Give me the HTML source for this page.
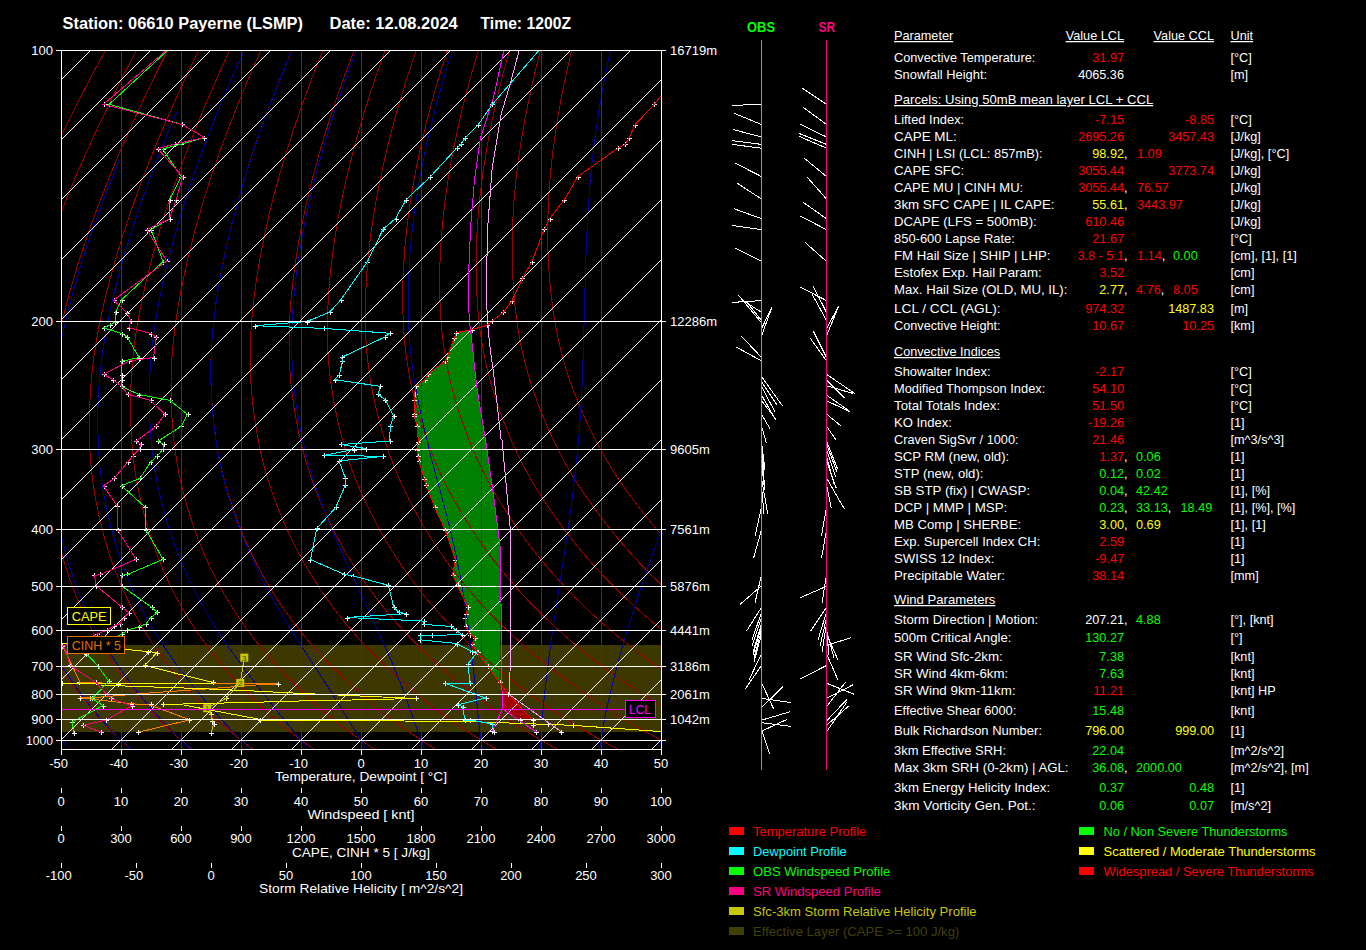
<!DOCTYPE html><html><head><meta charset="utf-8"><style>html,body{margin:0;padding:0;background:#000;width:1366px;height:950px;overflow:hidden}</style></head><body><svg width="1366" height="950" viewBox="0 0 1366 950" style="position:absolute;left:0;top:0;font-family:'Liberation Sans', sans-serif">
<rect width="1366" height="950" fill="#000"/>
<defs><clipPath id="pc"><rect x="61" y="50" width="600" height="699"/></clipPath></defs>
<g clip-path="url(#pc)">
<rect x="61" y="645" width="600" height="87" fill="#3c3800"/>
<polygon points="472.2,329.5 456.0,332.7 454.5,337.6 447.2,356.7 444.9,361.2 428.0,374.4 425.1,379.6 415.5,386.2 414.7,394.3 414.4,400.2 414.0,413.5 414.4,416.4 417.0,426.0 418.5,442.0 416.8,449.5 417.9,455.8 418.9,461.0 424.2,479.0 426.3,485.3 434.7,507.4 445.3,530.5 455.4,559.6 452.6,574.7 457.5,585.3 467.8,607.4 466.3,613.7 465.3,617.9 465.7,626.5 470.1,634.6 475.3,637.6 472.3,643.5 476.7,651.6 487.8,666.3 499.6,682.5 501.0,602.0 500.0,545.3 492.6,488.4 485.5,440.0 480.3,409.0 476.6,385.5 471.5,338.3" fill="#008000"/>
<polygon points="501.5,684 509.5,694.5 533,720.5 522,720.5 502.5,709.5" fill="#a00000"/>
<path d="M652,104.5h5M654.5,102v5M633,125.5h5M635.5,123v5M627,138.5h5M629.5,136v5M623,144.5h5M625.5,142v5M616,148.5h5M618.5,146v5M576,177.5h5M578.5,175v5M562,200.5h5M564.5,198v5M548,219.5h5M550.5,217v5M542,229.5h5M544.5,227v5M530,262.5h5M532.5,260v5M520,278.5h5M522.5,276v5M510,301.5h5M512.5,299v5M501,312.5h5M503.5,310v5M490,321.5h5M492.5,319v5M485,325.5h5M487.5,323v5M470,330.5h5M472.5,328v5M454,333.5h5M456.5,331v5M452,338.5h5M454.5,336v5M445,357.5h5M447.5,355v5M443,361.5h5M445.5,359v5M426,374.5h5M428.5,372v5M423,380.5h5M425.5,378v5M414,386.5h5M416.5,384v5M413,394.5h5M415.5,392v5M412,400.5h5M414.5,398v5M412,414.5h5M414.5,412v5M412,416.5h5M414.5,414v5M415,426.5h5M417.5,424v5M416,442.5h5M418.5,440v5M415,450.5h5M417.5,448v5M416,456.5h5M418.5,454v5M417,461.5h5M419.5,459v5M422,479.5h5M424.5,477v5M424,485.5h5M426.5,483v5M433,507.5h5M435.5,505v5M443,530.5h5M445.5,528v5M453,560.5h5M455.5,558v5M451,575.5h5M453.5,573v5M456,585.5h5M458.5,583v5M466,607.5h5M468.5,605v5M464,614.5h5M466.5,612v5M463,618.5h5M465.5,616v5M464,626.5h5M466.5,624v5M468,635.5h5M470.5,633v5M473,638.5h5M475.5,636v5M470,644.5h5M472.5,642v5M475,652.5h5M477.5,650v5M486,666.5h5M488.5,664v5M498,682.5h5M500.5,680v5M506,694.5h5M508.5,692v5M531,720.5h5M533.5,718v5" stroke="#fff" stroke-width="1" fill="none" shape-rendering="crispEdges"/><path d="M490,104.5h5M492.5,102v5M476,125.5h5M478.5,123v5M463,138.5h5M465.5,136v5M459,144.5h5M461.5,142v5M455,148.5h5M457.5,146v5M428,177.5h5M430.5,175v5M404,200.5h5M406.5,198v5M394,219.5h5M396.5,217v5M381,229.5h5M383.5,227v5M365,262.5h5M367.5,260v5M339,300.5h5M341.5,298v5M328,312.5h5M330.5,310v5M305,322.5h5M307.5,320v5M253,326.5h5M255.5,324v5M322,328.5h5M324.5,326v5M388,333.5h5M390.5,331v5M383,337.5h5M385.5,335v5M340,357.5h5M342.5,355v5M340,361.5h5M342.5,359v5M337,375.5h5M339.5,373v5M333,380.5h5M335.5,378v5M378,386.5h5M380.5,384v5M376,394.5h5M378.5,392v5M383,400.5h5M385.5,398v5M392,416.5h5M394.5,414v5M388,426.5h5M390.5,424v5M388,441.5h5M390.5,439v5M339,444.5h5M341.5,442v5M364,449.5h5M366.5,447v5M352,450.5h5M354.5,448v5M322,455.5h5M324.5,453v5M381,456.5h5M383.5,454v5M337,461.5h5M339.5,459v5M343,478.5h5M345.5,476v5M343,485.5h5M345.5,483v5M334,507.5h5M336.5,505v5M315,528.5h5M317.5,526v5M308,560.5h5M310.5,558v5M342,574.5h5M344.5,572v5M351,576.5h5M353.5,574v5M386,585.5h5M388.5,583v5M392,607.5h5M394.5,605v5M397,612.5h5M399.5,610v5M404,614.5h5M406.5,612v5M345,618.5h5M347.5,616v5M422,621.5h5M424.5,619v5M422,624.5h5M424.5,622v5M449,626.5h5M451.5,624v5M454,630.5h5M456.5,628v5M460,635.5h5M462.5,633v5M430,635.5h5M432.5,633v5M418,635.5h5M420.5,633v5M418,640.5h5M420.5,638v5M455,644.5h5M457.5,642v5M470,652.5h5M472.5,650v5M476,652.5h5M478.5,650v5M466,664.5h5M468.5,662v5M468,683.5h5M470.5,681v5M443,683.5h5M445.5,681v5M484,698.5h5M486.5,696v5M456,705.5h5M458.5,703v5M461,707.5h5M463.5,705v5M463,720.5h5M465.5,718v5M468,720.5h5M470.5,718v5M490,724.5h5M492.5,722v5M492,732.5h5M494.5,730v5" stroke="#fff" stroke-width="1" fill="none" shape-rendering="crispEdges"/><path d="M102,104.5h5M104.5,102v5M180,124.5h5M182.5,122v5M202,138.5h5M204.5,136v5M173,144.5h5M175.5,142v5M156,149.5h5M158.5,147v5M181,177.5h5M183.5,175v5M174,200.5h5M176.5,198v5M168,219.5h5M170.5,217v5M145,230.5h5M147.5,228v5M165,261.5h5M167.5,259v5M112,300.5h5M114.5,298v5M125,313.5h5M127.5,311v5M129,321.5h5M131.5,319v5M127,328.5h5M129.5,326v5M149,334.5h5M151.5,332v5M154,337.5h5M156.5,335v5M152,358.5h5M154.5,356v5M127,361.5h5M129.5,359v5M102,374.5h5M104.5,372v5M111,380.5h5M113.5,378v5M120,386.5h5M122.5,384v5M126,394.5h5M128.5,392v5M149,400.5h5M151.5,398v5M163,414.5h5M165.5,412v5M154,426.5h5M156.5,424v5M134,441.5h5M136.5,439v5M139,444.5h5M141.5,442v5M138,449.5h5M140.5,447v5M131,456.5h5M133.5,454v5M126,462.5h5M128.5,460v5M112,478.5h5M114.5,476v5M102,486.5h5M104.5,484v5M115,506.5h5M117.5,504v5M116,530.5h5M118.5,528v5M134,559.5h5M136.5,557v5M98,574.5h5M100.5,572v5M92,575.5h5M94.5,573v5M94,586.5h5M96.5,584v5M120,607.5h5M122.5,605v5M127,613.5h5M129.5,611v5M122,618.5h5M124.5,616v5M118,624.5h5M120.5,622v5M112,626.5h5M114.5,624v5M105,630.5h5M107.5,628v5M95,634.5h5M97.5,632v5M92,636.5h5M94.5,634v5M60,646.5h5M62.5,644v5M65,652.5h5M67.5,650v5M68,665.5h5M70.5,663v5M94,682.5h5M96.5,680v5M109,698.5h5M111.5,696v5M130,706.5h5M132.5,704v5M104,720.5h5M106.5,718v5M81,725.5h5M83.5,723v5M99,732.5h5M101.5,730v5" stroke="#fff" stroke-width="1" fill="none" shape-rendering="crispEdges"/><path d="M107,104.5h5M109.5,102v5M180,124.5h5M182.5,122v5M202,138.5h5M204.5,136v5M179,144.5h5M181.5,142v5M161,149.5h5M163.5,147v5M179,177.5h5M181.5,175v5M168,200.5h5M170.5,198v5M168,219.5h5M170.5,217v5M149,230.5h5M151.5,228v5M161,262.5h5M163.5,260v5M120,300.5h5M122.5,298v5M114,312.5h5M116.5,310v5M113,322.5h5M115.5,320v5M108,325.5h5M110.5,323v5M102,328.5h5M104.5,326v5M120,334.5h5M122.5,332v5M125,337.5h5M127.5,335v5M137,358.5h5M139.5,356v5M120,361.5h5M122.5,359v5M120,375.5h5M122.5,373v5M120,380.5h5M122.5,378v5M120,386.5h5M122.5,384v5M137,395.5h5M139.5,393v5M168,400.5h5M170.5,398v5M186,414.5h5M188.5,412v5M179,426.5h5M181.5,424v5M156,441.5h5M158.5,439v5M162,444.5h5M164.5,442v5M161,449.5h5M163.5,447v5M155,456.5h5M157.5,454v5M149,462.5h5M151.5,460v5M138,478.5h5M140.5,476v5M120,486.5h5M122.5,484v5M143,507.5h5M145.5,505v5M144,530.5h5M146.5,528v5M161,559.5h5M163.5,557v5M125,574.5h5M127.5,572v5M120,575.5h5M122.5,573v5M120,586.5h5M122.5,584v5M150,607.5h5M152.5,605v5M155,612.5h5M157.5,610v5M149,618.5h5M151.5,616v5M144,624.5h5M146.5,622v5M137,627.5h5M139.5,625v5M125,630.5h5M127.5,628v5M120,634.5h5M122.5,632v5M84,654.5h5M86.5,652v5M96,666.5h5M98.5,664v5M107,681.5h5M109.5,679v5M90,698.5h5M92.5,696v5M101,706.5h5M103.5,704v5M70,722.5h5M72.5,720v5M72,733.5h5M74.5,731v5" stroke="#fff" stroke-width="1" fill="none" shape-rendering="crispEdges"/>
<g shape-rendering="crispEdges"><polyline points="70.6,749.2 68.2,747.0 65.8,744.7 63.4,742.4 61.1,740.1 58.8,737.8 56.5,735.4 54.3,733.1 52.1,730.7 50.0,728.3 47.8,725.9 45.7,723.5 43.7,721.1 41.6,718.6 39.6,716.2 37.7,713.7 35.7,711.2 33.8,708.6 32.0,706.1 30.1,703.5 28.3,701.0 26.5,698.4 24.7,695.8 23.0,693.3 21.2,690.7 19.5,688.1 17.8,685.5 16.2,682.9 14.5,680.3 12.9,677.7 11.3,675.0 9.7,672.4 8.2,669.7 6.7,667.1 5.2,664.4 3.7,661.7 2.2,659.0 0.8,656.3 -0.6,653.6 -2.0,650.9 -3.3,648.1 -4.7,645.4 -6.0,642.6 -7.2,639.9 -8.5,637.1 -9.7,634.3 -10.9,631.5 -12.1,628.7 -13.2,625.8 -14.3,623.0 -15.4,620.1 -16.5,617.2 -17.5,614.4 -18.5,611.5 -19.5,608.6 -20.5,605.6 -21.4,602.7 -22.3,599.8 -23.2,596.8 -24.0,593.8 -24.9,590.8 -25.7,587.9 -26.5,584.8 -27.2,581.8 -28.0,578.8 -28.7,575.8 -29.4,572.7 -30.0,569.7 -30.7,566.6 -31.3,563.5 -31.9,560.4 -32.4,557.3 -33.0,554.2 -33.5,551.0 -34.0,547.9 -34.4,544.7 -34.9,541.6 -35.3,538.4 -35.7,535.2 -36.1,532.0 -36.4,528.8 -36.7,525.6 -37.0,522.3 -37.3,519.1 -37.6,515.8 -37.8,512.6 -38.0,509.3 -38.2,506.0 -38.4,502.7 -38.6,499.4 -38.7,496.1 -38.8,492.8 -38.9,489.5 -38.9,486.1 -39.0,482.8 -39.0,479.4 -38.9,476.0 -38.9,472.6 -38.8,469.1 -38.7,465.7 -38.5,462.2 -38.3,458.7 -38.1,455.2 -37.9,451.7 -37.6,448.1 -37.3,444.6 -37.0,441.0 -36.7,437.4 -36.3,433.8 -35.9,430.2 -35.5,426.6 -35.1,423.0 -34.6,419.3 -34.2,415.7 -33.7,412.0 -33.1,408.3 -32.6,404.6 -32.0,400.9 -31.4,397.2 -30.8,393.5 -30.1,389.7 -29.4,385.9 -28.7,382.1 -27.9,378.3 -27.1,374.4 -26.3,370.6 -25.5,366.7 -24.6,362.8 -23.7,358.9 -22.8,354.9 -21.8,350.9 -20.8,347.0 -19.7,342.9 -18.6,338.9 -17.5,334.8 -16.4,330.7 -15.2,326.6 -13.9,322.4 -12.7,318.2 -11.4,314.0 -10.1,309.8 -8.7,305.6 -7.3,301.3 -5.9,297.1 -4.5,292.8 -3.0,288.5 -1.5,284.1 -0.0,279.8 1.5,275.4 3.1,271.1 4.7,266.7 6.3,262.2 8.0,257.8 9.7,253.4 11.4,248.9 13.1,244.4 14.9,239.9 16.7,235.3 18.5,230.8 20.4,226.2 22.3,221.6 24.2,217.0 26.1,212.4 28.1,207.8 30.1,203.1 32.1,198.4 34.2,193.7 36.3,189.0 38.4,184.3 40.5,179.5 42.7,174.7 44.9,169.9 47.1,165.1 49.4,160.3 51.7,155.4 54.0,150.5 56.3,145.6 58.7,140.7 61.1,135.8 63.5,130.8 66.0,125.8 68.5,120.8 71.0,115.8 73.5,110.8 76.1,105.7 78.7,100.6 81.3,95.5 84.0,90.4 86.7,85.3 89.4,80.1 92.1,74.9 94.9,69.7 97.7,64.5 100.6,59.2 103.4,54.0 106.3,48.7 109.2,43.4 112.2,38.0 115.2,32.7 118.2,27.3" fill="none" stroke="#9a0000" stroke-width="1" />
<polyline points="131.4,749.2 128.8,747.0 126.2,744.7 123.6,742.4 121.1,740.1 118.6,737.8 116.1,735.4 113.7,733.1 111.3,730.7 108.9,728.3 106.6,725.9 104.3,723.5 102.0,721.1 99.8,718.6 97.6,716.2 95.4,713.7 93.3,711.2 91.2,708.6 89.1,706.1 87.1,703.5 85.1,701.0 83.1,698.4 81.1,695.8 79.2,693.3 77.2,690.7 75.3,688.1 73.5,685.5 71.6,682.9 69.8,680.3 67.9,677.7 66.2,675.0 64.4,672.4 62.7,669.7 61.0,667.1 59.3,664.4 57.6,661.7 56.0,659.0 54.4,656.3 52.8,653.6 51.2,650.9 49.7,648.1 48.2,645.4 46.7,642.6 45.2,639.9 43.8,637.1 42.4,634.3 41.0,631.5 39.7,628.7 38.4,625.8 37.1,623.0 35.8,620.1 34.6,617.2 33.3,614.4 32.2,611.5 31.0,608.6 29.9,605.6 28.8,602.7 27.7,599.8 26.6,596.8 25.6,593.8 24.6,590.8 23.6,587.9 22.7,584.8 21.7,581.8 20.8,578.8 20.0,575.8 19.1,572.7 18.3,569.7 17.5,566.6 16.7,563.5 15.9,560.4 15.2,557.3 14.5,554.2 13.8,551.0 13.2,547.9 12.5,544.7 11.9,541.6 11.3,538.4 10.8,535.2 10.3,532.0 9.8,528.8 9.3,525.6 8.8,522.3 8.4,519.1 8.0,515.8 7.6,512.6 7.2,509.3 6.8,506.0 6.5,502.7 6.2,499.4 5.9,496.1 5.7,492.8 5.4,489.5 5.2,486.1 5.0,482.8 4.9,479.4 4.8,476.0 4.7,472.6 4.6,469.1 4.6,465.7 4.6,462.2 4.6,458.7 4.7,455.2 4.8,451.7 4.9,448.1 5.0,444.6 5.2,441.0 5.4,437.4 5.6,433.8 5.9,430.2 6.1,426.6 6.4,423.0 6.7,419.3 7.0,415.7 7.4,412.0 7.8,408.3 8.2,404.6 8.6,400.9 9.1,397.2 9.6,393.5 10.1,389.7 10.7,385.9 11.3,382.1 11.9,378.3 12.5,374.4 13.2,370.6 13.9,366.7 14.6,362.8 15.4,358.9 16.2,354.9 17.1,350.9 17.9,347.0 18.9,342.9 19.8,338.9 20.8,334.8 21.8,330.7 22.9,326.6 24.0,322.4 25.1,318.2 26.3,314.0 27.5,309.8 28.7,305.6 29.9,301.3 31.2,297.1 32.5,292.8 33.9,288.5 35.2,284.1 36.6,279.8 38.0,275.4 39.5,271.1 41.0,266.7 42.5,262.2 44.0,257.8 45.6,253.4 47.2,248.9 48.8,244.4 50.4,239.9 52.1,235.3 53.8,230.8 55.5,226.2 57.3,221.6 59.1,217.0 60.9,212.4 62.8,207.8 64.7,203.1 66.6,198.4 68.5,193.7 70.5,189.0 72.5,184.3 74.5,179.5 76.5,174.7 78.6,169.9 80.7,165.1 82.9,160.3 85.0,155.4 87.2,150.5 89.5,145.6 91.7,140.7 94.0,135.8 96.3,130.8 98.7,125.8 101.0,120.8 103.5,115.8 105.9,110.8 108.3,105.7 110.8,100.6 113.4,95.5 115.9,90.4 118.5,85.3 121.1,80.1 123.7,74.9 126.4,69.7 129.1,64.5 131.8,59.2 134.6,54.0 137.4,48.7 140.2,43.4 143.0,38.0 145.9,32.7 148.8,27.3" fill="none" stroke="#9a0000" stroke-width="1" />
<polyline points="192.3,749.2 189.4,747.0 186.6,744.7 183.8,742.4 181.1,740.1 178.4,737.8 175.7,735.4 173.1,733.1 170.5,730.7 167.9,728.3 165.4,725.9 162.9,723.5 160.4,721.1 158.0,718.6 155.6,716.2 153.2,713.7 150.9,711.2 148.6,708.6 146.3,706.1 144.1,703.5 141.9,701.0 139.7,698.4 137.5,695.8 135.4,693.3 133.2,690.7 131.1,688.1 129.1,685.5 127.0,682.9 125.0,680.3 123.0,677.7 121.0,675.0 119.1,672.4 117.1,669.7 115.3,667.1 113.4,664.4 111.5,661.7 109.7,659.0 107.9,656.3 106.1,653.6 104.4,650.9 102.7,648.1 101.0,645.4 99.3,642.6 97.7,639.9 96.1,637.1 94.5,634.3 92.9,631.5 91.4,628.7 89.9,625.8 88.4,623.0 87.0,620.1 85.6,617.2 84.2,614.4 82.8,611.5 81.5,608.6 80.2,605.6 78.9,602.7 77.7,599.8 76.4,596.8 75.2,593.8 74.1,590.8 72.9,587.9 71.8,584.8 70.7,581.8 69.6,578.8 68.6,575.8 67.6,572.7 66.6,569.7 65.6,566.6 64.6,563.5 63.7,560.4 62.8,557.3 62.0,554.2 61.1,551.0 60.3,547.9 59.5,544.7 58.7,541.6 58.0,538.4 57.3,535.2 56.6,532.0 55.9,528.8 55.3,525.6 54.7,522.3 54.1,519.1 53.5,515.8 53.0,512.6 52.4,509.3 51.9,506.0 51.4,502.7 51.0,499.4 50.5,496.1 50.1,492.8 49.7,489.5 49.4,486.1 49.0,482.8 48.7,479.4 48.5,476.0 48.2,472.6 48.0,469.1 47.8,465.7 47.7,462.2 47.5,458.7 47.5,455.2 47.4,451.7 47.4,448.1 47.4,444.6 47.4,441.0 47.5,437.4 47.5,433.8 47.6,430.2 47.7,426.6 47.9,423.0 48.1,419.3 48.2,415.7 48.5,412.0 48.7,408.3 49.0,404.6 49.3,400.9 49.6,397.2 50.0,393.5 50.3,389.7 50.8,385.9 51.2,382.1 51.7,378.3 52.2,374.4 52.7,370.6 53.3,366.7 53.9,362.8 54.5,358.9 55.2,354.9 55.9,350.9 56.7,347.0 57.5,342.9 58.3,338.9 59.1,334.8 60.0,330.7 60.9,326.6 61.9,322.4 62.9,318.2 63.9,314.0 65.0,309.8 66.1,305.6 67.2,301.3 68.4,297.1 69.6,292.8 70.8,288.5 72.0,284.1 73.3,279.8 74.6,275.4 75.9,271.1 77.2,266.7 78.6,262.2 80.0,257.8 81.5,253.4 82.9,248.9 84.4,244.4 86.0,239.9 87.5,235.3 89.1,230.8 90.7,226.2 92.3,221.6 94.0,217.0 95.7,212.4 97.5,207.8 99.2,203.1 101.0,198.4 102.8,193.7 104.7,189.0 106.5,184.3 108.5,179.5 110.4,174.7 112.4,169.9 114.3,165.1 116.4,160.3 118.4,155.4 120.5,150.5 122.6,145.6 124.8,140.7 126.9,135.8 129.1,130.8 131.4,125.8 133.6,120.8 135.9,115.8 138.2,110.8 140.6,105.7 143.0,100.6 145.4,95.5 147.8,90.4 150.3,85.3 152.8,80.1 155.3,74.9 157.9,69.7 160.5,64.5 163.1,59.2 165.7,54.0 168.4,48.7 171.1,43.4 173.9,38.0 176.6,32.7 179.4,27.3" fill="none" stroke="#9a0000" stroke-width="1" />
<polyline points="253.1,749.2 250.1,747.0 247.0,744.7 244.1,742.4 241.1,740.1 238.2,737.8 235.3,735.4 232.5,733.1 229.7,730.7 226.9,728.3 224.2,725.9 221.5,723.5 218.8,721.1 216.1,718.6 213.5,716.2 211.0,713.7 208.5,711.2 206.0,708.6 203.5,706.1 201.1,703.5 198.7,701.0 196.3,698.4 193.9,695.8 191.6,693.3 189.3,690.7 187.0,688.1 184.7,685.5 182.5,682.9 180.2,680.3 178.0,677.7 175.9,675.0 173.7,672.4 171.6,669.7 169.5,667.1 167.5,664.4 165.5,661.7 163.5,659.0 161.5,656.3 159.5,653.6 157.6,650.9 155.7,648.1 153.8,645.4 151.9,642.6 150.1,639.9 148.3,637.1 146.6,634.3 144.8,631.5 143.1,628.7 141.5,625.8 139.8,623.0 138.2,620.1 136.6,617.2 135.0,614.4 133.5,611.5 132.0,608.6 130.5,605.6 129.1,602.7 127.6,599.8 126.2,596.8 124.9,593.8 123.5,590.8 122.2,587.9 120.9,584.8 119.6,581.8 118.4,578.8 117.2,575.8 116.0,572.7 114.8,569.7 113.7,566.6 112.6,563.5 111.5,560.4 110.4,557.3 109.4,554.2 108.4,551.0 107.4,547.9 106.5,544.7 105.5,541.6 104.6,538.4 103.8,535.2 102.9,532.0 102.1,528.8 101.3,525.6 100.5,522.3 99.8,519.1 99.0,515.8 98.3,512.6 97.6,509.3 97.0,506.0 96.3,502.7 95.7,499.4 95.1,496.1 94.6,492.8 94.0,489.5 93.5,486.1 93.0,482.8 92.6,479.4 92.1,476.0 91.8,472.6 91.4,469.1 91.1,465.7 90.8,462.2 90.5,458.7 90.2,455.2 90.0,451.7 89.9,448.1 89.7,444.6 89.6,441.0 89.5,437.4 89.5,433.8 89.4,430.2 89.4,426.6 89.4,423.0 89.4,419.3 89.4,415.7 89.5,412.0 89.6,408.3 89.8,404.6 89.9,400.9 90.1,397.2 90.3,393.5 90.6,389.7 90.8,385.9 91.1,382.1 91.5,378.3 91.9,374.4 92.3,370.6 92.7,366.7 93.2,362.8 93.7,358.9 94.2,354.9 94.8,350.9 95.4,347.0 96.0,342.9 96.7,338.9 97.4,334.8 98.2,330.7 99.0,326.6 99.8,322.4 100.7,318.2 101.6,314.0 102.5,309.8 103.5,305.6 104.5,301.3 105.5,297.1 106.6,292.8 107.7,288.5 108.8,284.1 109.9,279.8 111.1,275.4 112.3,271.1 113.5,266.7 114.8,262.2 116.0,257.8 117.4,253.4 118.7,248.9 120.1,244.4 121.5,239.9 122.9,235.3 124.4,230.8 125.9,226.2 127.4,221.6 128.9,217.0 130.5,212.4 132.1,207.8 133.8,203.1 135.4,198.4 137.1,193.7 138.9,189.0 140.6,184.3 142.4,179.5 144.2,174.7 146.1,169.9 148.0,165.1 149.9,160.3 151.8,155.4 153.8,150.5 155.8,145.6 157.8,140.7 159.9,135.8 162.0,130.8 164.1,125.8 166.2,120.8 168.4,115.8 170.6,110.8 172.9,105.7 175.1,100.6 177.4,95.5 179.7,90.4 182.1,85.3 184.5,80.1 186.9,74.9 189.4,69.7 191.9,64.5 194.4,59.2 196.9,54.0 199.5,48.7 202.1,43.4 204.7,38.0 207.4,32.7 210.1,27.3" fill="none" stroke="#9a0000" stroke-width="1" />
<polyline points="313.9,749.2 310.7,747.0 307.5,744.7 304.3,742.4 301.1,740.1 298.0,737.8 294.9,735.4 291.9,733.1 288.9,730.7 285.9,728.3 282.9,725.9 280.0,723.5 277.2,721.1 274.3,718.6 271.5,716.2 268.8,713.7 266.0,711.2 263.3,708.6 260.7,706.1 258.0,703.5 255.4,701.0 252.9,698.4 250.3,695.8 247.8,693.3 245.3,690.7 242.8,688.1 240.3,685.5 237.9,682.9 235.5,680.3 233.1,677.7 230.7,675.0 228.4,672.4 226.1,669.7 223.8,667.1 221.6,664.4 219.4,661.7 217.2,659.0 215.0,656.3 212.9,653.6 210.8,650.9 208.7,648.1 206.6,645.4 204.6,642.6 202.6,639.9 200.6,637.1 198.7,634.3 196.8,631.5 194.9,628.7 193.0,625.8 191.2,623.0 189.4,620.1 187.6,617.2 185.9,614.4 184.2,611.5 182.5,608.6 180.8,605.6 179.2,602.7 177.6,599.8 176.1,596.8 174.5,593.8 173.0,590.8 171.5,587.9 170.0,584.8 168.6,581.8 167.2,578.8 165.8,575.8 164.5,572.7 163.1,569.7 161.8,566.6 160.5,563.5 159.3,560.4 158.1,557.3 156.9,554.2 155.7,551.0 154.6,547.9 153.4,544.7 152.4,541.6 151.3,538.4 150.3,535.2 149.3,532.0 148.3,528.8 147.3,525.6 146.4,522.3 145.5,519.1 144.6,515.8 143.7,512.6 142.9,509.3 142.0,506.0 141.2,502.7 140.5,499.4 139.7,496.1 139.0,492.8 138.3,489.5 137.7,486.1 137.0,482.8 136.4,479.4 135.8,476.0 135.3,472.6 134.8,469.1 134.3,465.7 133.8,462.2 133.4,458.7 133.0,455.2 132.7,451.7 132.4,448.1 132.1,444.6 131.8,441.0 131.6,437.4 131.4,433.8 131.2,430.2 131.0,426.6 130.9,423.0 130.7,419.3 130.6,415.7 130.6,412.0 130.5,408.3 130.5,404.6 130.6,400.9 130.6,397.2 130.7,393.5 130.8,389.7 130.9,385.9 131.1,382.1 131.3,378.3 131.5,374.4 131.8,370.6 132.1,366.7 132.4,362.8 132.8,358.9 133.2,354.9 133.6,350.9 134.1,347.0 134.6,342.9 135.2,338.9 135.8,334.8 136.4,330.7 137.1,326.6 137.8,322.4 138.5,318.2 139.3,314.0 140.1,309.8 140.9,305.6 141.8,301.3 142.7,297.1 143.6,292.8 144.6,288.5 145.5,284.1 146.5,279.8 147.6,275.4 148.7,271.1 149.8,266.7 150.9,262.2 152.1,257.8 153.2,253.4 154.5,248.9 155.7,244.4 157.0,239.9 158.3,235.3 159.6,230.8 161.0,226.2 162.4,221.6 163.9,217.0 165.3,212.4 166.8,207.8 168.3,203.1 169.9,198.4 171.5,193.7 173.1,189.0 174.7,184.3 176.4,179.5 178.1,174.7 179.8,169.9 181.6,165.1 183.4,160.3 185.2,155.4 187.1,150.5 188.9,145.6 190.8,140.7 192.8,135.8 194.8,130.8 196.8,125.8 198.8,120.8 200.9,115.8 203.0,110.8 205.1,105.7 207.3,100.6 209.4,95.5 211.7,90.4 213.9,85.3 216.2,80.1 218.5,74.9 220.9,69.7 223.2,64.5 225.6,59.2 228.1,54.0 230.5,48.7 233.0,43.4 235.6,38.0 238.1,32.7 240.7,27.3" fill="none" stroke="#9a0000" stroke-width="1" />
<polyline points="374.8,749.2 371.3,747.0 367.9,744.7 364.5,742.4 361.1,740.1 357.8,737.8 354.5,735.4 351.3,733.1 348.1,730.7 344.9,728.3 341.7,725.9 338.6,723.5 335.5,721.1 332.5,718.6 329.5,716.2 326.5,713.7 323.6,711.2 320.7,708.6 317.9,706.1 315.0,703.5 312.2,701.0 309.5,698.4 306.7,695.8 304.0,693.3 301.3,690.7 298.6,688.1 295.9,685.5 293.3,682.9 290.7,680.3 288.1,677.7 285.6,675.0 283.1,672.4 280.6,669.7 278.1,667.1 275.7,664.4 273.3,661.7 270.9,659.0 268.6,656.3 266.2,653.6 263.9,650.9 261.7,648.1 259.4,645.4 257.2,642.6 255.0,639.9 252.9,637.1 250.8,634.3 248.7,631.5 246.6,628.7 244.6,625.8 242.6,623.0 240.6,620.1 238.7,617.2 236.8,614.4 234.9,611.5 233.0,608.6 231.2,605.6 229.4,602.7 227.6,599.8 225.9,596.8 224.1,593.8 222.5,590.8 220.8,587.9 219.2,584.8 217.6,581.8 216.0,578.8 214.4,575.8 212.9,572.7 211.4,569.7 209.9,566.6 208.5,563.5 207.1,560.4 205.7,557.3 204.3,554.2 203.0,551.0 201.7,547.9 200.4,544.7 199.2,541.6 197.9,538.4 196.8,535.2 195.6,532.0 194.4,528.8 193.3,525.6 192.2,522.3 191.2,519.1 190.1,515.8 189.1,512.6 188.1,509.3 187.1,506.0 186.2,502.7 185.2,499.4 184.3,496.1 183.5,492.8 182.6,489.5 181.8,486.1 181.0,482.8 180.3,479.4 179.5,476.0 178.8,472.6 178.2,469.1 177.5,465.7 176.9,462.2 176.4,458.7 175.8,455.2 175.3,451.7 174.9,448.1 174.5,444.6 174.0,441.0 173.7,437.4 173.3,433.8 173.0,430.2 172.6,426.6 172.3,423.0 172.1,419.3 171.9,415.7 171.6,412.0 171.5,408.3 171.3,404.6 171.2,400.9 171.1,397.2 171.0,393.5 171.0,389.7 171.0,385.9 171.0,382.1 171.1,378.3 171.2,374.4 171.3,370.6 171.5,366.7 171.7,362.8 171.9,358.9 172.2,354.9 172.5,350.9 172.8,347.0 173.2,342.9 173.6,338.9 174.1,334.8 174.6,330.7 175.1,326.6 175.7,322.4 176.3,318.2 177.0,314.0 177.6,309.8 178.3,305.6 179.1,301.3 179.8,297.1 180.6,292.8 181.4,288.5 182.3,284.1 183.2,279.8 184.1,275.4 185.1,271.1 186.0,266.7 187.0,262.2 188.1,257.8 189.1,253.4 190.2,248.9 191.4,244.4 192.5,239.9 193.7,235.3 194.9,230.8 196.2,226.2 197.5,221.6 198.8,217.0 200.1,212.4 201.5,207.8 202.9,203.1 204.3,198.4 205.8,193.7 207.3,189.0 208.8,184.3 210.3,179.5 211.9,174.7 213.5,169.9 215.2,165.1 216.9,160.3 218.6,155.4 220.3,150.5 222.1,145.6 223.9,140.7 225.7,135.8 227.6,130.8 229.5,125.8 231.4,120.8 233.4,115.8 235.3,110.8 237.4,105.7 239.4,100.6 241.5,95.5 243.6,90.4 245.7,85.3 247.9,80.1 250.1,74.9 252.3,69.7 254.6,64.5 256.9,59.2 259.2,54.0 261.6,48.7 264.0,43.4 266.4,38.0 268.8,32.7 271.3,27.3" fill="none" stroke="#9a0000" stroke-width="1" />
<polyline points="435.6,749.2 432.0,747.0 428.3,744.7 424.7,742.4 421.1,740.1 417.6,737.8 414.1,735.4 410.7,733.1 407.2,730.7 403.9,728.3 400.5,725.9 397.2,723.5 393.9,721.1 390.7,718.6 387.5,716.2 384.3,713.7 381.2,711.2 378.1,708.6 375.0,706.1 372.0,703.5 369.0,701.0 366.0,698.4 363.1,695.8 360.2,693.3 357.3,690.7 354.4,688.1 351.6,685.5 348.7,682.9 346.0,680.3 343.2,677.7 340.5,675.0 337.8,672.4 335.1,669.7 332.4,667.1 329.8,664.4 327.2,661.7 324.7,659.0 322.1,656.3 319.6,653.6 317.1,650.9 314.7,648.1 312.3,645.4 309.9,642.6 307.5,639.9 305.2,637.1 302.9,634.3 300.6,631.5 298.4,628.7 296.1,625.8 294.0,623.0 291.8,620.1 289.7,617.2 287.6,614.4 285.5,611.5 283.5,608.6 281.5,605.6 279.5,602.7 277.6,599.8 275.7,596.8 273.8,593.8 271.9,590.8 270.1,587.9 268.3,584.8 266.5,581.8 264.8,578.8 263.1,575.8 261.4,572.7 259.7,569.7 258.1,566.6 256.5,563.5 254.9,560.4 253.3,557.3 251.8,554.2 250.3,551.0 248.8,547.9 247.4,544.7 246.0,541.6 244.6,538.4 243.2,535.2 241.9,532.0 240.6,528.8 239.3,525.6 238.1,522.3 236.9,519.1 235.7,515.8 234.5,512.6 233.3,509.3 232.2,506.0 231.1,502.7 230.0,499.4 228.9,496.1 227.9,492.8 226.9,489.5 225.9,486.1 225.0,482.8 224.1,479.4 223.2,476.0 222.4,472.6 221.6,469.1 220.8,465.7 220.0,462.2 219.3,458.7 218.6,455.2 218.0,451.7 217.4,448.1 216.8,444.6 216.2,441.0 215.7,437.4 215.2,433.8 214.7,430.2 214.3,426.6 213.8,423.0 213.4,419.3 213.1,415.7 212.7,412.0 212.4,408.3 212.1,404.6 211.8,400.9 211.6,397.2 211.4,393.5 211.2,389.7 211.1,385.9 211.0,382.1 210.9,378.3 210.9,374.4 210.9,370.6 210.9,366.7 210.9,362.8 211.0,358.9 211.2,354.9 211.3,350.9 211.6,347.0 211.8,342.9 212.1,338.9 212.4,334.8 212.8,330.7 213.2,326.6 213.6,322.4 214.1,318.2 214.6,314.0 215.2,309.8 215.7,305.6 216.3,301.3 217.0,297.1 217.6,292.8 218.3,288.5 219.1,284.1 219.8,279.8 220.6,275.4 221.4,271.1 222.3,266.7 223.2,262.2 224.1,257.8 225.0,253.4 226.0,248.9 227.0,244.4 228.0,239.9 229.1,235.3 230.2,230.8 231.3,226.2 232.5,221.6 233.7,217.0 234.9,212.4 236.2,207.8 237.4,203.1 238.7,198.4 240.1,193.7 241.5,189.0 242.9,184.3 244.3,179.5 245.8,174.7 247.3,169.9 248.8,165.1 250.4,160.3 252.0,155.4 253.6,150.5 255.2,145.6 256.9,140.7 258.6,135.8 260.4,130.8 262.2,125.8 264.0,120.8 265.8,115.8 267.7,110.8 269.6,105.7 271.5,100.6 273.5,95.5 275.5,90.4 277.5,85.3 279.6,80.1 281.7,74.9 283.8,69.7 286.0,64.5 288.2,59.2 290.4,54.0 292.6,48.7 294.9,43.4 297.2,38.0 299.6,32.7 301.9,27.3" fill="none" stroke="#9a0000" stroke-width="1" />
<polyline points="496.5,749.2 492.6,747.0 488.7,744.7 484.9,742.4 481.2,740.1 477.4,737.8 473.7,735.4 470.1,733.1 466.4,730.7 462.8,728.3 459.3,725.9 455.8,723.5 452.3,721.1 448.8,718.6 445.4,716.2 442.1,713.7 438.8,711.2 435.5,708.6 432.2,706.1 429.0,703.5 425.8,701.0 422.6,698.4 419.5,695.8 416.4,693.3 413.3,690.7 410.2,688.1 407.2,685.5 404.2,682.9 401.2,680.3 398.2,677.7 395.3,675.0 392.4,672.4 389.6,669.7 386.7,667.1 383.9,664.4 381.2,661.7 378.4,659.0 375.7,656.3 373.0,653.6 370.3,650.9 367.7,648.1 365.1,645.4 362.5,642.6 359.9,639.9 357.4,637.1 355.0,634.3 352.5,631.5 350.1,628.7 347.7,625.8 345.3,623.0 343.0,620.1 340.7,617.2 338.5,614.4 336.2,611.5 334.0,608.6 331.8,605.6 329.7,602.7 327.6,599.8 325.5,596.8 323.4,593.8 321.4,590.8 319.4,587.9 317.4,584.8 315.5,581.8 313.6,578.8 311.7,575.8 309.8,572.7 308.0,569.7 306.2,566.6 304.4,563.5 302.7,560.4 301.0,557.3 299.3,554.2 297.6,551.0 296.0,547.9 294.4,544.7 292.8,541.6 291.2,538.4 289.7,535.2 288.2,532.0 286.8,528.8 285.4,525.6 283.9,522.3 282.6,519.1 281.2,515.8 279.9,512.6 278.5,509.3 277.2,506.0 276.0,502.7 274.8,499.4 273.5,496.1 272.4,492.8 271.2,489.5 270.1,486.1 269.0,482.8 267.9,479.4 266.9,476.0 265.9,472.6 264.9,469.1 264.0,465.7 263.1,462.2 262.3,458.7 261.4,455.2 260.6,451.7 259.9,448.1 259.2,444.6 258.5,441.0 257.8,437.4 257.1,433.8 256.5,430.2 255.9,426.6 255.3,423.0 254.8,419.3 254.3,415.7 253.8,412.0 253.3,408.3 252.9,404.6 252.5,400.9 252.1,397.2 251.8,393.5 251.4,389.7 251.2,385.9 250.9,382.1 250.7,378.3 250.5,374.4 250.4,370.6 250.3,366.7 250.2,362.8 250.2,358.9 250.2,354.9 250.2,350.9 250.3,347.0 250.4,342.9 250.5,338.9 250.7,334.8 251.0,330.7 251.2,326.6 251.6,322.4 251.9,318.2 252.3,314.0 252.7,309.8 253.1,305.6 253.6,301.3 254.1,297.1 254.7,292.8 255.2,288.5 255.8,284.1 256.5,279.8 257.1,275.4 257.8,271.1 258.6,266.7 259.3,262.2 260.1,257.8 260.9,253.4 261.8,248.9 262.7,244.4 263.6,239.9 264.5,235.3 265.5,230.8 266.5,226.2 267.5,221.6 268.6,217.0 269.7,212.4 270.8,207.8 272.0,203.1 273.2,198.4 274.4,193.7 275.7,189.0 277.0,184.3 278.3,179.5 279.6,174.7 281.0,169.9 282.4,165.1 283.9,160.3 285.3,155.4 286.9,150.5 288.4,145.6 290.0,140.7 291.6,135.8 293.2,130.8 294.9,125.8 296.6,120.8 298.3,115.8 300.1,110.8 301.9,105.7 303.7,100.6 305.5,95.5 307.4,90.4 309.3,85.3 311.3,80.1 313.3,74.9 315.3,69.7 317.3,64.5 319.4,59.2 321.5,54.0 323.7,48.7 325.9,43.4 328.1,38.0 330.3,32.7 332.6,27.3" fill="none" stroke="#9a0000" stroke-width="1" />
<polyline points="557.3,749.2 553.2,747.0 549.2,744.7 545.1,742.4 541.2,740.1 537.2,737.8 533.3,735.4 529.4,733.1 525.6,730.7 521.8,728.3 518.1,725.9 514.3,723.5 510.7,721.1 507.0,718.6 503.4,716.2 499.9,713.7 496.3,711.2 492.8,708.6 489.4,706.1 486.0,703.5 482.6,701.0 479.2,698.4 475.9,695.8 472.6,693.3 469.3,690.7 466.0,688.1 462.8,685.5 459.6,682.9 456.4,680.3 453.3,677.7 450.2,675.0 447.1,672.4 444.0,669.7 441.0,667.1 438.0,664.4 435.1,661.7 432.1,659.0 429.2,656.3 426.4,653.6 423.5,650.9 420.7,648.1 417.9,645.4 415.1,642.6 412.4,639.9 409.7,637.1 407.0,634.3 404.4,631.5 401.8,628.7 399.3,625.8 396.7,623.0 394.2,620.1 391.7,617.2 389.3,614.4 386.9,611.5 384.5,608.6 382.2,605.6 379.8,602.7 377.6,599.8 375.3,596.8 373.1,593.8 370.9,590.8 368.7,587.9 366.6,584.8 364.4,581.8 362.4,578.8 360.3,575.8 358.3,572.7 356.3,569.7 354.3,566.6 352.4,563.5 350.5,560.4 348.6,557.3 346.7,554.2 344.9,551.0 343.1,547.9 341.3,544.7 339.6,541.6 337.9,538.4 336.2,535.2 334.6,532.0 333.0,528.8 331.4,525.6 329.8,522.3 328.3,519.1 326.7,515.8 325.2,512.6 323.8,509.3 322.3,506.0 320.9,502.7 319.5,499.4 318.1,496.1 316.8,492.8 315.5,489.5 314.2,486.1 313.0,482.8 311.8,479.4 310.6,476.0 309.5,472.6 308.3,469.1 307.3,465.7 306.2,462.2 305.2,458.7 304.2,455.2 303.3,451.7 302.4,448.1 301.5,444.6 300.7,441.0 299.8,437.4 299.0,433.8 298.3,430.2 297.5,426.6 296.8,423.0 296.1,419.3 295.5,415.7 294.8,412.0 294.2,408.3 293.6,404.6 293.1,400.9 292.6,397.2 292.1,393.5 291.7,389.7 291.2,385.9 290.9,382.1 290.5,378.3 290.2,374.4 289.9,370.6 289.7,366.7 289.5,362.8 289.3,358.9 289.2,354.9 289.1,350.9 289.0,347.0 289.0,342.9 289.0,338.9 289.1,334.8 289.2,330.7 289.3,326.6 289.5,322.4 289.7,318.2 290.0,314.0 290.2,309.8 290.6,305.6 290.9,301.3 291.3,297.1 291.7,292.8 292.1,288.5 292.6,284.1 293.1,279.8 293.7,275.4 294.2,271.1 294.8,266.7 295.5,262.2 296.1,257.8 296.8,253.4 297.5,248.9 298.3,244.4 299.1,239.9 299.9,235.3 300.8,230.8 301.6,226.2 302.6,221.6 303.5,217.0 304.5,212.4 305.5,207.8 306.5,203.1 307.6,198.4 308.7,193.7 309.9,189.0 311.0,184.3 312.2,179.5 313.5,174.7 314.7,169.9 316.0,165.1 317.4,160.3 318.7,155.4 320.1,150.5 321.6,145.6 323.0,140.7 324.5,135.8 326.0,130.8 327.6,125.8 329.2,120.8 330.8,115.8 332.4,110.8 334.1,105.7 335.8,100.6 337.6,95.5 339.3,90.4 341.2,85.3 343.0,80.1 344.9,74.9 346.8,69.7 348.7,64.5 350.7,59.2 352.7,54.0 354.7,48.7 356.8,43.4 358.9,38.0 361.0,32.7 363.2,27.3" fill="none" stroke="#9a0000" stroke-width="1" />
<polyline points="618.2,749.2 613.9,747.0 609.6,744.7 605.4,742.4 601.2,740.1 597.0,737.8 592.9,735.4 588.8,733.1 584.8,730.7 580.8,728.3 576.8,725.9 572.9,723.5 569.0,721.1 565.2,718.6 561.4,716.2 557.6,713.7 553.9,711.2 550.2,708.6 546.6,706.1 543.0,703.5 539.4,701.0 535.8,698.4 532.3,695.8 528.8,693.3 525.3,690.7 521.9,688.1 518.4,685.5 515.0,682.9 511.7,680.3 508.3,677.7 505.0,675.0 501.8,672.4 498.5,669.7 495.3,667.1 492.1,664.4 489.0,661.7 485.9,659.0 482.8,656.3 479.7,653.6 476.7,650.9 473.7,648.1 470.7,645.4 467.8,642.6 464.9,639.9 462.0,637.1 459.1,634.3 456.3,631.5 453.6,628.7 450.8,625.8 448.1,623.0 445.4,620.1 442.8,617.2 440.2,614.4 437.6,611.5 435.0,608.6 432.5,605.6 430.0,602.7 427.5,599.8 425.1,596.8 422.7,593.8 420.3,590.8 418.0,587.9 415.7,584.8 413.4,581.8 411.1,578.8 408.9,575.8 406.7,572.7 404.6,569.7 402.4,566.6 400.3,563.5 398.2,560.4 396.2,557.3 394.2,554.2 392.2,551.0 390.2,547.9 388.3,544.7 386.4,541.6 384.5,538.4 382.7,535.2 380.9,532.0 379.1,528.8 377.4,525.6 375.6,522.3 373.9,519.1 372.3,515.8 370.6,512.6 369.0,509.3 367.4,506.0 365.8,502.7 364.3,499.4 362.8,496.1 361.3,492.8 359.8,489.5 358.4,486.1 357.0,482.8 355.6,479.4 354.3,476.0 353.0,472.6 351.7,469.1 350.5,465.7 349.3,462.2 348.1,458.7 347.0,455.2 345.9,451.7 344.9,448.1 343.9,444.6 342.9,441.0 341.9,437.4 341.0,433.8 340.0,430.2 339.2,426.6 338.3,423.0 337.5,419.3 336.7,415.7 335.9,412.0 335.1,408.3 334.4,404.6 333.7,400.9 333.1,397.2 332.5,393.5 331.9,389.7 331.3,385.9 330.8,382.1 330.3,378.3 329.9,374.4 329.4,370.6 329.1,366.7 328.7,362.8 328.4,358.9 328.1,354.9 327.9,350.9 327.7,347.0 327.6,342.9 327.5,338.9 327.4,334.8 327.4,330.7 327.4,326.6 327.4,322.4 327.5,318.2 327.6,314.0 327.8,309.8 328.0,305.6 328.2,301.3 328.4,297.1 328.7,292.8 329.0,288.5 329.4,284.1 329.8,279.8 330.2,275.4 330.6,271.1 331.1,266.7 331.6,262.2 332.1,257.8 332.7,253.4 333.3,248.9 333.9,244.4 334.6,239.9 335.3,235.3 336.0,230.8 336.8,226.2 337.6,221.6 338.4,217.0 339.3,212.4 340.2,207.8 341.1,203.1 342.1,198.4 343.0,193.7 344.1,189.0 345.1,184.3 346.2,179.5 347.3,174.7 348.5,169.9 349.7,165.1 350.9,160.3 352.1,155.4 353.4,150.5 354.7,145.6 356.1,140.7 357.4,135.8 358.8,130.8 360.3,125.8 361.7,120.8 363.3,115.8 364.8,110.8 366.4,105.7 368.0,100.6 369.6,95.5 371.3,90.4 373.0,85.3 374.7,80.1 376.5,74.9 378.3,69.7 380.1,64.5 382.0,59.2 383.9,54.0 385.8,48.7 387.7,43.4 389.7,38.0 391.8,32.7 393.8,27.3" fill="none" stroke="#9a0000" stroke-width="1" />
<polyline points="679.0,749.2 674.5,747.0 670.0,744.7 665.6,742.4 661.2,740.1 656.8,737.8 652.5,735.4 648.2,733.1 644.0,730.7 639.8,728.3 635.6,725.9 631.5,723.5 627.4,721.1 623.4,718.6 619.4,716.2 615.4,713.7 611.5,711.2 607.6,708.6 603.8,706.1 599.9,703.5 596.2,701.0 592.4,698.4 588.7,695.8 585.0,693.3 581.3,690.7 577.7,688.1 574.1,685.5 570.5,682.9 566.9,680.3 563.4,677.7 559.9,675.0 556.4,672.4 553.0,669.7 549.6,667.1 546.3,664.4 542.9,661.7 539.6,659.0 536.3,656.3 533.1,653.6 529.9,650.9 526.7,648.1 523.5,645.4 520.4,642.6 517.3,639.9 514.3,637.1 511.2,634.3 508.2,631.5 505.3,628.7 502.4,625.8 499.5,623.0 496.6,620.1 493.8,617.2 491.0,614.4 488.2,611.5 485.5,608.6 482.8,605.6 480.2,602.7 477.5,599.8 474.9,596.8 472.3,593.8 469.8,590.8 467.3,587.9 464.8,584.8 462.4,581.8 459.9,578.8 457.5,575.8 455.2,572.7 452.9,569.7 450.6,566.6 448.3,563.5 446.0,560.4 443.8,557.3 441.6,554.2 439.5,551.0 437.4,547.9 435.3,544.7 433.2,541.6 431.2,538.4 429.2,535.2 427.2,532.0 425.3,528.8 423.4,525.6 421.5,522.3 419.6,519.1 417.8,515.8 416.0,512.6 414.2,509.3 412.5,506.0 410.7,502.7 409.0,499.4 407.4,496.1 405.7,492.8 404.1,489.5 402.5,486.1 401.0,482.8 399.5,479.4 398.0,476.0 396.5,472.6 395.1,469.1 393.7,465.7 392.4,462.2 391.1,458.7 389.8,455.2 388.6,451.7 387.4,448.1 386.2,444.6 385.1,441.0 384.0,437.4 382.9,433.8 381.8,430.2 380.8,426.6 379.8,423.0 378.8,419.3 377.9,415.7 376.9,412.0 376.1,408.3 375.2,404.6 374.4,400.9 373.6,397.2 372.8,393.5 372.1,389.7 371.4,385.9 370.7,382.1 370.1,378.3 369.5,374.4 369.0,370.6 368.5,366.7 368.0,362.8 367.5,358.9 367.1,354.9 366.8,350.9 366.4,347.0 366.2,342.9 365.9,338.9 365.7,334.8 365.5,330.7 365.4,326.6 365.3,322.4 365.3,318.2 365.3,314.0 365.3,309.8 365.4,305.6 365.5,301.3 365.6,297.1 365.7,292.8 365.9,288.5 366.2,284.1 366.4,279.8 366.7,275.4 367.0,271.1 367.4,266.7 367.7,262.2 368.2,257.8 368.6,253.4 369.1,248.9 369.6,244.4 370.1,239.9 370.7,235.3 371.3,230.8 372.0,226.2 372.6,221.6 373.3,217.0 374.1,212.4 374.9,207.8 375.7,203.1 376.5,198.4 377.4,193.7 378.3,189.0 379.2,184.3 380.2,179.5 381.2,174.7 382.2,169.9 383.3,165.1 384.4,160.3 385.5,155.4 386.7,150.5 387.9,145.6 389.1,140.7 390.4,135.8 391.6,130.8 393.0,125.8 394.3,120.8 395.7,115.8 397.2,110.8 398.6,105.7 400.1,100.6 401.6,95.5 403.2,90.4 404.8,85.3 406.4,80.1 408.1,74.9 409.7,69.7 411.5,64.5 413.2,59.2 415.0,54.0 416.8,48.7 418.7,43.4 420.6,38.0 422.5,32.7 424.5,27.3" fill="none" stroke="#9a0000" stroke-width="1" />
<polyline points="739.8,749.2 735.1,747.0 730.4,744.7 725.8,742.4 721.2,740.1 716.6,737.8 712.1,735.4 707.6,733.1 703.2,730.7 698.8,728.3 694.4,725.9 690.1,723.5 685.8,721.1 681.5,718.6 677.3,716.2 673.2,713.7 669.1,711.2 665.0,708.6 660.9,706.1 656.9,703.5 652.9,701.0 649.0,698.4 645.1,695.8 641.2,693.3 637.3,690.7 633.5,688.1 629.7,685.5 625.9,682.9 622.2,680.3 618.4,677.7 614.8,675.0 611.1,672.4 607.5,669.7 603.9,667.1 600.4,664.4 596.8,661.7 593.3,659.0 589.9,656.3 586.5,653.6 583.1,650.9 579.7,648.1 576.3,645.4 573.0,642.6 569.8,639.9 566.5,637.1 563.3,634.3 560.2,631.5 557.0,628.7 553.9,625.8 550.9,623.0 547.8,620.1 544.8,617.2 541.9,614.4 538.9,611.5 536.0,608.6 533.1,605.6 530.3,602.7 527.5,599.8 524.7,596.8 522.0,593.8 519.3,590.8 516.6,587.9 513.9,584.8 511.3,581.8 508.7,578.8 506.2,575.8 503.6,572.7 501.1,569.7 498.7,566.6 496.2,563.5 493.8,560.4 491.5,557.3 489.1,554.2 486.8,551.0 484.5,547.9 482.3,544.7 480.0,541.6 477.8,538.4 475.7,535.2 473.6,532.0 471.5,528.8 469.4,525.6 467.4,522.3 465.3,519.1 463.3,515.8 461.4,512.6 459.4,509.3 457.5,506.0 455.6,502.7 453.8,499.4 452.0,496.1 450.2,492.8 448.4,489.5 446.7,486.1 445.0,482.8 443.3,479.4 441.7,476.0 440.1,472.6 438.5,469.1 437.0,465.7 435.5,462.2 434.0,458.7 432.6,455.2 431.2,451.7 429.9,448.1 428.6,444.6 427.3,441.0 426.0,437.4 424.8,433.8 423.6,430.2 422.4,426.6 421.3,423.0 420.2,419.3 419.1,415.7 418.0,412.0 417.0,408.3 416.0,404.6 415.0,400.9 414.1,397.2 413.2,393.5 412.3,389.7 411.5,385.9 410.7,382.1 409.9,378.3 409.2,374.4 408.5,370.6 407.9,366.7 407.2,362.8 406.7,358.9 406.1,354.9 405.6,350.9 405.2,347.0 404.7,342.9 404.4,338.9 404.0,334.8 403.7,330.7 403.5,326.6 403.3,322.4 403.1,318.2 403.0,314.0 402.9,309.8 402.8,305.6 402.7,301.3 402.7,297.1 402.8,292.8 402.8,288.5 402.9,284.1 403.0,279.8 403.2,275.4 403.4,271.1 403.6,266.7 403.9,262.2 404.2,257.8 404.5,253.4 404.8,248.9 405.2,244.4 405.7,239.9 406.1,235.3 406.6,230.8 407.1,226.2 407.7,221.6 408.3,217.0 408.9,212.4 409.5,207.8 410.2,203.1 410.9,198.4 411.7,193.7 412.5,189.0 413.3,184.3 414.1,179.5 415.0,174.7 415.9,169.9 416.9,165.1 417.9,160.3 418.9,155.4 419.9,150.5 421.0,145.6 422.1,140.7 423.3,135.8 424.5,130.8 425.7,125.8 426.9,120.8 428.2,115.8 429.5,110.8 430.9,105.7 432.2,100.6 433.7,95.5 435.1,90.4 436.6,85.3 438.1,80.1 439.7,74.9 441.2,69.7 442.8,64.5 444.5,59.2 446.2,54.0 447.9,48.7 449.6,43.4 451.4,38.0 453.2,32.7 455.1,27.3" fill="none" stroke="#9a0000" stroke-width="1" />
<polyline points="800.7,749.2 795.7,747.0 790.9,744.7 786.0,742.4 781.2,740.1 776.4,737.8 771.7,735.4 767.0,733.1 762.4,730.7 757.7,728.3 753.2,725.9 748.7,723.5 744.2,721.1 739.7,718.6 735.3,716.2 731.0,713.7 726.6,711.2 722.4,708.6 718.1,706.1 713.9,703.5 709.7,701.0 705.6,698.4 701.5,695.8 697.4,693.3 693.3,690.7 689.3,688.1 685.3,685.5 681.3,682.9 677.4,680.3 673.5,677.7 669.6,675.0 665.8,672.4 662.0,669.7 658.2,667.1 654.5,664.4 650.8,661.7 647.1,659.0 643.4,656.3 639.8,653.6 636.2,650.9 632.7,648.1 629.2,645.4 625.7,642.6 622.2,639.9 618.8,637.1 615.4,634.3 612.1,631.5 608.8,628.7 605.5,625.8 602.2,623.0 599.0,620.1 595.9,617.2 592.7,614.4 589.6,611.5 586.5,608.6 583.5,605.6 580.5,602.7 577.5,599.8 574.5,596.8 571.6,593.8 568.7,590.8 565.9,587.9 563.1,584.8 560.3,581.8 557.5,578.8 554.8,575.8 552.1,572.7 549.4,569.7 546.8,566.6 544.2,563.5 541.6,560.4 539.1,557.3 536.6,554.2 534.1,551.0 531.6,547.9 529.2,544.7 526.9,541.6 524.5,538.4 522.2,535.2 519.9,532.0 517.6,528.8 515.4,525.6 513.2,522.3 511.0,519.1 508.9,515.8 506.8,512.6 504.7,509.3 502.6,506.0 500.6,502.7 498.5,499.4 496.6,496.1 494.6,492.8 492.7,489.5 490.8,486.1 489.0,482.8 487.1,479.4 485.4,476.0 483.6,472.6 481.9,469.1 480.2,465.7 478.6,462.2 477.0,458.7 475.4,455.2 473.9,451.7 472.4,448.1 470.9,444.6 469.5,441.0 468.1,437.4 466.7,433.8 465.4,430.2 464.1,426.6 462.8,423.0 461.5,419.3 460.3,415.7 459.1,412.0 457.9,408.3 456.8,404.6 455.7,400.9 454.6,397.2 453.5,393.5 452.5,389.7 451.6,385.9 450.6,382.1 449.7,378.3 448.9,374.4 448.0,370.6 447.3,366.7 446.5,362.8 445.8,358.9 445.1,354.9 444.5,350.9 443.9,347.0 443.3,342.9 442.8,338.9 442.4,334.8 441.9,330.7 441.5,326.6 441.2,322.4 440.9,318.2 440.6,314.0 440.4,309.8 440.2,305.6 440.0,301.3 439.9,297.1 439.8,292.8 439.7,288.5 439.7,284.1 439.7,279.8 439.7,275.4 439.8,271.1 439.9,266.7 440.0,262.2 440.2,257.8 440.4,253.4 440.6,248.9 440.9,244.4 441.2,239.9 441.5,235.3 441.9,230.8 442.3,226.2 442.7,221.6 443.2,217.0 443.7,212.4 444.2,207.8 444.8,203.1 445.4,198.4 446.0,193.7 446.7,189.0 447.4,184.3 448.1,179.5 448.9,174.7 449.7,169.9 450.5,165.1 451.4,160.3 452.3,155.4 453.2,150.5 454.2,145.6 455.2,140.7 456.2,135.8 457.3,130.8 458.4,125.8 459.5,120.8 460.7,115.8 461.9,110.8 463.1,105.7 464.4,100.6 465.7,95.5 467.0,90.4 468.4,85.3 469.8,80.1 471.2,74.9 472.7,69.7 474.2,64.5 475.8,59.2 477.3,54.0 478.9,48.7 480.6,43.4 482.3,38.0 484.0,32.7 485.7,27.3" fill="none" stroke="#9a0000" stroke-width="1" />
<polyline points="861.5,749.2 856.4,747.0 851.3,744.7 846.2,742.4 841.2,740.1 836.2,737.8 831.3,735.4 826.4,733.1 821.5,730.7 816.7,728.3 812.0,725.9 807.2,723.5 802.5,721.1 797.9,718.6 793.3,716.2 788.7,713.7 784.2,711.2 779.7,708.6 775.3,706.1 770.9,703.5 766.5,701.0 762.2,698.4 757.9,695.8 753.6,693.3 749.3,690.7 745.1,688.1 740.9,685.5 736.8,682.9 732.6,680.3 728.5,677.7 724.5,675.0 720.5,672.4 716.5,669.7 712.5,667.1 708.6,664.4 704.7,661.7 700.8,659.0 697.0,656.3 693.2,653.6 689.4,650.9 685.7,648.1 682.0,645.4 678.3,642.6 674.7,639.9 671.1,637.1 667.5,634.3 664.0,631.5 660.5,628.7 657.0,625.8 653.6,623.0 650.2,620.1 646.9,617.2 643.6,614.4 640.3,611.5 637.0,608.6 633.8,605.6 630.6,602.7 627.5,599.8 624.3,596.8 621.3,593.8 618.2,590.8 615.2,587.9 612.2,584.8 609.2,581.8 606.3,578.8 603.4,575.8 600.5,572.7 597.7,569.7 594.9,566.6 592.1,563.5 589.4,560.4 586.7,557.3 584.0,554.2 581.4,551.0 578.8,547.9 576.2,544.7 573.7,541.6 571.1,538.4 568.7,535.2 566.2,532.0 563.8,528.8 561.4,525.6 559.1,522.3 556.7,519.1 554.4,515.8 552.1,512.6 549.9,509.3 547.7,506.0 545.5,502.7 543.3,499.4 541.2,496.1 539.1,492.8 537.0,489.5 535.0,486.1 533.0,482.8 531.0,479.4 529.1,476.0 527.2,472.6 525.3,469.1 523.5,465.7 521.7,462.2 519.9,458.7 518.2,455.2 516.5,451.7 514.9,448.1 513.3,444.6 511.7,441.0 510.2,437.4 508.6,433.8 507.1,430.2 505.7,426.6 504.2,423.0 502.8,419.3 501.5,415.7 500.1,412.0 498.8,408.3 497.5,404.6 496.3,400.9 495.1,397.2 493.9,393.5 492.8,389.7 491.6,385.9 490.6,382.1 489.5,378.3 488.5,374.4 487.6,370.6 486.7,366.7 485.8,362.8 484.9,358.9 484.1,354.9 483.3,350.9 482.6,347.0 481.9,342.9 481.3,338.9 480.7,334.8 480.1,330.7 479.6,326.6 479.1,322.4 478.7,318.2 478.3,314.0 477.9,309.8 477.6,305.6 477.3,301.3 477.0,297.1 476.8,292.8 476.6,288.5 476.5,284.1 476.3,279.8 476.2,275.4 476.2,271.1 476.2,266.7 476.2,262.2 476.2,257.8 476.3,253.4 476.4,248.9 476.5,244.4 476.7,239.9 476.9,235.3 477.2,230.8 477.4,226.2 477.7,221.6 478.1,217.0 478.5,212.4 478.9,207.8 479.3,203.1 479.8,198.4 480.3,193.7 480.9,189.0 481.5,184.3 482.1,179.5 482.7,174.7 483.4,169.9 484.1,165.1 484.9,160.3 485.7,155.4 486.5,150.5 487.3,145.6 488.2,140.7 489.1,135.8 490.1,130.8 491.1,125.8 492.1,120.8 493.2,115.8 494.2,110.8 495.4,105.7 496.5,100.6 497.7,95.5 498.9,90.4 500.2,85.3 501.5,80.1 502.8,74.9 504.2,69.7 505.6,64.5 507.0,59.2 508.5,54.0 510.0,48.7 511.5,43.4 513.1,38.0 514.7,32.7 516.3,27.3" fill="none" stroke="#9a0000" stroke-width="1" />
<polyline points="922.4,749.2 917.0,747.0 911.7,744.7 906.4,742.4 901.2,740.1 896.0,737.8 890.9,735.4 885.8,733.1 880.7,730.7 875.7,728.3 870.7,725.9 865.8,723.5 860.9,721.1 856.1,718.6 851.3,716.2 846.5,713.7 841.8,711.2 837.1,708.6 832.5,706.1 827.9,703.5 823.3,701.0 818.8,698.4 814.3,695.8 809.8,693.3 805.3,690.7 800.9,688.1 796.6,685.5 792.2,682.9 787.9,680.3 783.6,677.7 779.3,675.0 775.1,672.4 771.0,669.7 766.8,667.1 762.7,664.4 758.6,661.7 754.6,659.0 750.5,656.3 746.6,653.6 742.6,650.9 738.7,648.1 734.8,645.4 730.9,642.6 727.1,639.9 723.4,637.1 719.6,634.3 715.9,631.5 712.2,628.7 708.6,625.8 705.0,623.0 701.4,620.1 697.9,617.2 694.4,614.4 691.0,611.5 687.5,608.6 684.1,605.6 680.8,602.7 677.4,599.8 674.2,596.8 670.9,593.8 667.7,590.8 664.5,587.9 661.3,584.8 658.2,581.8 655.1,578.8 652.0,575.8 649.0,572.7 646.0,569.7 643.0,566.6 640.1,563.5 637.2,560.4 634.3,557.3 631.5,554.2 628.7,551.0 625.9,547.9 623.2,544.7 620.5,541.6 617.8,538.4 615.2,535.2 612.6,532.0 610.0,528.8 607.4,525.6 604.9,522.3 602.4,519.1 600.0,515.8 597.5,512.6 595.1,509.3 592.7,506.0 590.4,502.7 588.1,499.4 585.8,496.1 583.5,492.8 581.3,489.5 579.1,486.1 577.0,482.8 574.8,479.4 572.7,476.0 570.7,472.6 568.7,469.1 566.7,465.7 564.8,462.2 562.9,458.7 561.0,455.2 559.2,451.7 557.4,448.1 555.6,444.6 553.9,441.0 552.2,437.4 550.6,433.8 548.9,430.2 547.3,426.6 545.7,423.0 544.2,419.3 542.7,415.7 541.2,412.0 539.7,408.3 538.3,404.6 536.9,400.9 535.6,397.2 534.3,393.5 533.0,389.7 531.7,385.9 530.5,382.1 529.3,378.3 528.2,374.4 527.1,370.6 526.0,366.7 525.0,362.8 524.0,358.9 523.1,354.9 522.2,350.9 521.3,347.0 520.5,342.9 519.7,338.9 519.0,334.8 518.3,330.7 517.7,326.6 517.1,322.4 516.5,318.2 516.0,314.0 515.5,309.8 515.0,305.6 514.6,301.3 514.2,297.1 513.8,292.8 513.5,288.5 513.2,284.1 513.0,279.8 512.8,275.4 512.6,271.1 512.4,266.7 512.3,262.2 512.2,257.8 512.2,253.4 512.2,248.9 512.2,244.4 512.2,239.9 512.3,235.3 512.4,230.8 512.6,226.2 512.8,221.6 513.0,217.0 513.3,212.4 513.6,207.8 513.9,203.1 514.2,198.4 514.6,193.7 515.1,189.0 515.5,184.3 516.0,179.5 516.6,174.7 517.1,169.9 517.7,165.1 518.4,160.3 519.0,155.4 519.7,150.5 520.5,145.6 521.3,140.7 522.1,135.8 522.9,130.8 523.8,125.8 524.7,120.8 525.6,115.8 526.6,110.8 527.6,105.7 528.7,100.6 529.8,95.5 530.9,90.4 532.0,85.3 533.2,80.1 534.4,74.9 535.7,69.7 537.0,64.5 538.3,59.2 539.6,54.0 541.0,48.7 542.5,43.4 543.9,38.0 545.4,32.7 547.0,27.3" fill="none" stroke="#9a0000" stroke-width="1" />
<polyline points="983.2,749.2 977.6,747.0 972.1,744.7 966.7,742.4 961.2,740.1 955.8,737.8 950.5,735.4 945.2,733.1 939.9,730.7 934.7,728.3 929.5,725.9 924.4,723.5 919.3,721.1 914.2,718.6 909.2,716.2 904.3,713.7 899.4,711.2 894.5,708.6 889.7,706.1 884.9,703.5 880.1,701.0 875.4,698.4 870.7,695.8 866.0,693.3 861.4,690.7 856.7,688.1 852.2,685.5 847.6,682.9 843.1,680.3 838.6,677.7 834.2,675.0 829.8,672.4 825.4,669.7 821.1,667.1 816.8,664.4 812.5,661.7 808.3,659.0 804.1,656.3 799.9,653.6 795.8,650.9 791.7,648.1 787.6,645.4 783.6,642.6 779.6,639.9 775.6,637.1 771.7,634.3 767.8,631.5 764.0,628.7 760.2,625.8 756.4,623.0 752.6,620.1 748.9,617.2 745.3,614.4 741.6,611.5 738.0,608.6 734.5,605.6 730.9,602.7 727.4,599.8 724.0,596.8 720.5,593.8 717.1,590.8 713.8,587.9 710.4,584.8 707.1,581.8 703.9,578.8 700.7,575.8 697.5,572.7 694.3,569.7 691.2,566.6 688.1,563.5 685.0,560.4 682.0,557.3 679.0,554.2 676.0,551.0 673.1,547.9 670.2,544.7 667.3,541.6 664.4,538.4 661.6,535.2 658.9,532.0 656.1,528.8 653.4,525.6 650.8,522.3 648.1,519.1 645.5,515.8 642.9,512.6 640.3,509.3 637.8,506.0 635.3,502.7 632.8,499.4 630.4,496.1 628.0,492.8 625.6,489.5 623.3,486.1 620.9,482.8 618.7,479.4 616.4,476.0 614.2,472.6 612.1,469.1 609.9,465.7 607.9,462.2 605.8,458.7 603.8,455.2 601.8,451.7 599.9,448.1 598.0,444.6 596.1,441.0 594.3,437.4 592.5,433.8 590.7,430.2 588.9,426.6 587.2,423.0 585.5,419.3 583.9,415.7 582.2,412.0 580.7,408.3 579.1,404.6 577.6,400.9 576.1,397.2 574.6,393.5 573.2,389.7 571.8,385.9 570.5,382.1 569.1,378.3 567.9,374.4 566.6,370.6 565.4,366.7 564.3,362.8 563.2,358.9 562.1,354.9 561.1,350.9 560.1,347.0 559.1,342.9 558.2,338.9 557.3,334.8 556.5,330.7 555.7,326.6 555.0,322.4 554.3,318.2 553.6,314.0 553.0,309.8 552.4,305.6 551.9,301.3 551.3,297.1 550.9,292.8 550.4,288.5 550.0,284.1 549.6,279.8 549.3,275.4 549.0,271.1 548.7,266.7 548.4,262.2 548.2,257.8 548.1,253.4 547.9,248.9 547.8,244.4 547.7,239.9 547.7,235.3 547.7,230.8 547.7,226.2 547.8,221.6 547.9,217.0 548.1,212.4 548.2,207.8 548.4,203.1 548.7,198.4 549.0,193.7 549.3,189.0 549.6,184.3 550.0,179.5 550.4,174.7 550.9,169.9 551.3,165.1 551.9,160.3 552.4,155.4 553.0,150.5 553.6,145.6 554.3,140.7 555.0,135.8 555.7,130.8 556.5,125.8 557.3,120.8 558.1,115.8 559.0,110.8 559.9,105.7 560.8,100.6 561.8,95.5 562.8,90.4 563.8,85.3 564.9,80.1 566.0,74.9 567.2,69.7 568.3,64.5 569.6,59.2 570.8,54.0 572.1,48.7 573.4,43.4 574.8,38.0 576.2,32.7 577.6,27.3" fill="none" stroke="#9a0000" stroke-width="1" />
<polyline points="72.2,751.0 71.3,750.1 70.4,749.2 69.4,748.3 68.5,747.4 67.6,746.5 66.6,745.6 65.7,744.7 64.7,743.8 63.8,742.8 62.9,741.9 61.9,741.0 61.0,740.0 60.1,739.0 59.1,738.1 58.2,737.1 57.3,736.1 56.3,735.1 55.4,734.1 54.5,733.1 53.5,732.1 52.6,731.1 51.7,730.0 50.7,729.0 49.8,727.9 48.9,726.9 47.9,725.8 47.0,724.7 46.1,723.6 45.2,722.5 44.2,721.4 43.3,720.3 42.4,719.2 41.5,718.1 40.6,716.9 39.6,715.8 38.7,714.6 37.8,713.4 36.9,712.2 36.0,711.0 35.1,709.8 34.2,708.6 33.3,707.4 32.4,706.1 31.5,704.9 30.6,703.6 29.7,702.3 28.8,701.1 27.9,699.8 27.0,698.5 26.1,697.1 25.2,695.8 24.3,694.5 23.4,693.2 22.5,691.8 21.6,690.5 20.7,689.1 19.8,687.7 18.9,686.3 18.0,684.9 17.1,683.5 16.2,682.1 15.3,680.6 14.4,679.2 13.5,677.7 12.6,676.2 11.7,674.7 10.8,673.2 9.9,671.7 9.0,670.2 8.1,668.6 7.2,667.1 6.4,665.5 5.5,663.9 4.6,662.3 3.7,660.7 2.9,659.0 2.0,657.4 1.1,655.7 0.2,654.0 -0.6,652.3 -1.5,650.6 -2.3,648.9 -3.2,647.2 -4.0,645.4 -4.9,643.6 -5.7,641.8 -6.6,640.0 -7.4,638.1 -8.2,636.2 -9.1,634.3 -9.9,632.4 -10.7,630.5 -11.5,628.5 -12.3,626.6 -13.1,624.6 -13.8,622.5 -14.6,620.5 -15.4,618.4 -16.2,616.3 -16.9,614.2 -17.7,612.0 -18.4,609.8 -19.1,607.6 -19.9,605.4 -20.6,603.2 -21.3,600.9 -22.0,598.5 -22.7,596.2 -23.4,593.8 -24.1,591.4 -24.7,589.0 -25.4,586.5 -26.0,584.0 -26.6,581.5 -27.3,578.9 -27.9,576.3 -28.5,573.6 -29.1,571.0 -29.6,568.2 -30.2,565.5 -30.7,562.7 -31.3,559.9 -31.8,557.0 -32.3,554.1 -32.8,551.1 -33.3,548.1 -33.7,545.0 -34.1,541.9 -34.6,538.8 -35.0,535.6 -35.3,532.3 -35.7,529.0 -36.0,525.6 -36.3,522.2 -36.6,518.8 -36.9,515.2 -37.2,511.7 -37.4,508.0 -37.6,504.3 -37.8,500.6 -38.0,496.7 -38.1,492.8 -38.2,488.9 -38.2,484.8 -38.2,480.7 -38.2,476.4 -38.1,472.1 -38.0,467.7 -37.8,463.2 -37.6,458.6 -37.3,453.8 -37.0,449.0 -36.6,444.0 -36.1,439.0 -35.6,433.8 -35.0,428.5 -34.4,423.1 -33.7,417.6 -32.9,411.9 -32.1,406.1 -31.1,400.1 -30.1,394.0 -29.0,387.7 -27.8,381.2 -26.4,374.5 -25.0,367.6 -23.3,360.5 -21.6,353.1 -19.7,345.5 -17.6,337.7 -15.3,329.5 -12.8,321.0 -10.1,312.2 -7.2,303.1 -4.0,293.6 -0.7,283.9" fill="none" stroke="#00009a" stroke-width="1" />
<polyline points="132.8,751.0 131.9,750.1 130.9,749.2 129.9,748.3 128.9,747.4 127.9,746.5 126.9,745.6 125.9,744.7 125.0,743.8 124.0,742.8 123.0,741.9 122.0,741.0 121.0,740.0 120.0,739.0 119.0,738.1 118.0,737.1 117.0,736.1 116.0,735.1 115.0,734.1 114.0,733.1 113.1,732.1 112.1,731.1 111.1,730.0 110.1,729.0 109.1,727.9 108.1,726.9 107.1,725.8 106.1,724.7 105.1,723.6 104.1,722.5 103.1,721.4 102.1,720.3 101.1,719.2 100.1,718.1 99.1,716.9 98.1,715.8 97.1,714.6 96.2,713.4 95.2,712.2 94.2,711.0 93.2,709.8 92.2,708.6 91.2,707.4 90.2,706.1 89.3,704.9 88.3,703.6 87.3,702.3 86.3,701.1 85.3,699.8 84.3,698.5 83.3,697.1 82.3,695.8 81.4,694.5 80.4,693.2 79.4,691.8 78.4,690.5 77.4,689.1 76.4,687.7 75.4,686.3 74.4,684.9 73.4,683.5 72.4,682.1 71.4,680.6 70.4,679.2 69.4,677.7 68.4,676.2 67.4,674.7 66.4,673.2 65.4,671.7 64.4,670.2 63.4,668.6 62.4,667.1 61.5,665.5 60.5,663.9 59.5,662.3 58.5,660.7 57.5,659.0 56.5,657.4 55.6,655.7 54.6,654.0 53.6,652.3 52.6,650.6 51.7,648.9 50.7,647.2 49.7,645.4 48.8,643.6 47.8,641.8 46.8,640.0 45.9,638.1 44.9,636.2 44.0,634.3 43.1,632.4 42.1,630.5 41.2,628.5 40.3,626.6 39.4,624.6 38.5,622.5 37.5,620.5 36.6,618.4 35.8,616.3 34.9,614.2 34.0,612.0 33.1,609.8 32.2,607.6 31.4,605.4 30.5,603.2 29.7,600.9 28.8,598.5 28.0,596.2 27.2,593.8 26.4,591.4 25.6,589.0 24.8,586.5 24.0,584.0 23.2,581.5 22.5,578.9 21.7,576.3 21.0,573.6 20.2,571.0 19.5,568.2 18.8,565.5 18.1,562.7 17.4,559.9 16.7,557.0 16.1,554.1 15.4,551.1 14.8,548.1 14.2,545.0 13.6,541.9 13.0,538.8 12.4,535.6 11.9,532.3 11.4,529.0 10.9,525.6 10.4,522.2 9.9,518.8 9.5,515.2 9.0,511.7 8.6,508.0 8.2,504.3 7.9,500.6 7.5,496.7 7.2,492.8 6.9,488.9 6.7,484.8 6.5,480.7 6.3,476.4 6.2,472.1 6.1,467.7 6.1,463.2 6.1,458.6 6.2,453.8 6.4,449.0 6.6,444.0 6.8,439.0 7.2,433.8 7.5,428.5 7.9,423.1 8.4,417.6 8.9,411.9 9.6,406.1 10.3,400.1 11.0,394.0 11.9,387.7 12.9,381.2 14.0,374.5 15.2,367.6 16.6,360.5 18.1,353.1 19.8,345.5 21.6,337.7 23.6,329.5 25.8,321.0 28.3,312.2 30.9,303.1 33.7,293.6 36.8,283.9 40.1,273.7 43.6,263.1 47.4,252.1 51.6,240.7 56.0,228.7" fill="none" stroke="#00009a" stroke-width="1" />
<polyline points="192.9,751.0 191.9,750.1 191.0,749.2 190.0,748.3 189.0,747.4 188.0,746.5 187.0,745.6 186.0,744.7 185.0,743.8 184.0,742.8 183.0,741.9 182.0,741.0 181.0,740.0 180.0,739.0 179.0,738.1 178.0,737.1 177.0,736.1 175.9,735.1 174.9,734.1 173.9,733.1 172.9,732.1 171.8,731.1 170.8,730.0 169.8,729.0 168.8,727.9 167.7,726.9 166.7,725.8 165.7,724.7 164.6,723.6 163.6,722.5 162.6,721.4 161.5,720.3 160.5,719.2 159.4,718.1 158.4,716.9 157.4,715.8 156.3,714.6 155.3,713.4 154.2,712.2 153.2,711.0 152.2,709.8 151.1,708.6 150.1,707.4 149.0,706.1 148.0,704.9 146.9,703.6 145.9,702.3 144.8,701.1 143.8,699.8 142.7,698.5 141.7,697.1 140.6,695.8 139.5,694.5 138.5,693.2 137.4,691.8 136.3,690.5 135.2,689.1 134.2,687.7 133.1,686.3 132.0,684.9 130.9,683.5 129.9,682.1 128.8,680.6 127.7,679.2 126.6,677.7 125.5,676.2 124.4,674.7 123.3,673.2 122.3,671.7 121.2,670.2 120.1,668.6 119.0,667.1 117.9,665.5 116.8,663.9 115.8,662.3 114.7,660.7 113.6,659.0 112.5,657.4 111.4,655.7 110.3,654.0 109.2,652.3 108.2,650.6 107.1,648.9 106.0,647.2 104.9,645.4 103.8,643.6 102.8,641.8 101.7,640.0 100.6,638.1 99.6,636.2 98.5,634.3 97.4,632.4 96.4,630.5 95.3,628.5 94.3,626.6 93.3,624.6 92.2,622.5 91.2,620.5 90.2,618.4 89.1,616.3 88.1,614.2 87.1,612.0 86.1,609.8 85.1,607.6 84.1,605.4 83.1,603.2 82.1,600.9 81.2,598.5 80.2,596.2 79.2,593.8 78.3,591.4 77.3,589.0 76.4,586.5 75.5,584.0 74.5,581.5 73.6,578.9 72.7,576.3 71.8,573.6 70.9,571.0 70.1,568.2 69.2,565.5 68.3,562.7 67.5,559.9 66.7,557.0 65.8,554.1 65.0,551.1 64.2,548.1 63.5,545.0 62.7,541.9 62.0,538.8 61.2,535.6 60.5,532.3 59.8,529.0 59.2,525.6 58.5,522.2 57.9,518.8 57.2,515.2 56.6,511.7 56.0,508.0 55.4,504.3 54.9,500.6 54.4,496.7 53.9,492.8 53.4,488.9 53.0,484.8 52.6,480.7 52.2,476.4 51.9,472.1 51.6,467.7 51.4,463.2 51.2,458.6 51.1,453.8 51.0,449.0 51.0,444.0 51.1,439.0 51.1,433.8 51.3,428.5 51.5,423.1 51.7,417.6 52.0,411.9 52.4,406.1 52.9,400.1 53.4,394.0 54.1,387.7 54.8,381.2 55.7,374.5 56.6,367.6 57.7,360.5 59.0,353.1 60.3,345.5 61.9,337.7 63.7,329.5 65.6,321.0 67.8,312.2 70.1,303.1 72.6,293.6 75.4,283.9 78.3,273.7 81.6,263.1 85.1,252.1 88.9,240.7 93.0,228.7 97.5,216.3 102.3,203.2 107.6,189.6 113.3,175.2 119.5,160.2" fill="none" stroke="#00009a" stroke-width="1" />
<polyline points="252.2,751.0 251.3,750.1 250.4,749.2 249.5,748.3 248.5,747.4 247.6,746.5 246.7,745.6 245.7,744.7 244.8,743.8 243.9,742.8 242.9,741.9 242.0,741.0 241.0,740.0 240.0,739.0 239.1,738.1 238.1,737.1 237.1,736.1 236.2,735.1 235.2,734.1 234.2,733.1 233.2,732.1 232.2,731.1 231.2,730.0 230.2,729.0 229.2,727.9 228.2,726.9 227.2,725.8 226.2,724.7 225.2,723.6 224.2,722.5 223.2,721.4 222.1,720.3 221.1,719.2 220.1,718.1 219.0,716.9 218.0,715.8 217.0,714.6 215.9,713.4 214.9,712.2 213.8,711.0 212.8,709.8 211.7,708.6 210.7,707.4 209.6,706.1 208.6,704.9 207.5,703.6 206.4,702.3 205.4,701.1 204.3,699.8 203.2,698.5 202.1,697.1 201.0,695.8 199.9,694.5 198.8,693.2 197.7,691.8 196.6,690.5 195.5,689.1 194.4,687.7 193.3,686.3 192.1,684.9 191.0,683.5 189.9,682.1 188.7,680.6 187.6,679.2 186.5,677.7 185.3,676.2 184.2,674.7 183.0,673.2 181.9,671.7 180.7,670.2 179.6,668.6 178.4,667.1 177.2,665.5 176.1,663.9 174.9,662.3 173.8,660.7 172.6,659.0 171.4,657.4 170.3,655.7 169.1,654.0 167.9,652.3 166.7,650.6 165.6,648.9 164.4,647.2 163.2,645.4 162.0,643.6 160.8,641.8 159.7,640.0 158.5,638.1 157.3,636.2 156.2,634.3 155.0,632.4 153.8,630.5 152.7,628.5 151.5,626.6 150.3,624.6 149.2,622.5 148.0,620.5 146.9,618.4 145.7,616.3 144.6,614.2 143.5,612.0 142.3,609.8 141.2,607.6 140.1,605.4 138.9,603.2 137.8,600.9 136.7,598.5 135.6,596.2 134.5,593.8 133.4,591.4 132.3,589.0 131.2,586.5 130.1,584.0 129.1,581.5 128.0,578.9 126.9,576.3 125.9,573.6 124.9,571.0 123.8,568.2 122.8,565.5 121.8,562.7 120.8,559.9 119.8,557.0 118.8,554.1 117.8,551.1 116.9,548.1 115.9,545.0 115.0,541.9 114.1,538.8 113.1,535.6 112.3,532.3 111.4,529.0 110.5,525.6 109.7,522.2 108.9,518.8 108.0,515.2 107.2,511.7 106.4,508.0 105.7,504.3 104.9,500.6 104.2,496.7 103.5,492.8 102.8,488.9 102.2,484.8 101.6,480.7 101.0,476.4 100.5,472.1 100.0,467.7 99.6,463.2 99.2,458.6 98.8,453.8 98.5,449.0 98.3,444.0 98.1,439.0 98.0,433.8 97.9,428.5 97.8,423.1 97.8,417.6 97.9,411.9 98.0,406.1 98.2,400.1 98.5,394.0 98.9,387.7 99.4,381.2 100.0,374.5 100.7,367.6 101.5,360.5 102.4,353.1 103.6,345.5 104.8,337.7 106.3,329.5 107.9,321.0 109.8,312.2 111.8,303.1 114.0,293.6 116.4,283.9 119.1,273.7 122.0,263.1 125.1,252.1 128.6,240.7 132.4,228.7 136.5,216.3 140.9,203.2 145.8,189.6 151.1,175.2 156.9,160.2 163.3,144.3 170.2,127.6 177.8,109.9" fill="none" stroke="#00009a" stroke-width="1" />
<polyline points="310.5,751.0 309.7,750.1 308.9,749.2 308.2,748.3 307.4,747.4 306.6,746.5 305.8,745.6 305.0,744.7 304.2,743.8 303.4,742.8 302.6,741.9 301.8,741.0 301.0,740.0 300.2,739.0 299.4,738.1 298.5,737.1 297.7,736.1 296.8,735.1 296.0,734.1 295.1,733.1 294.3,732.1 293.4,731.1 292.6,730.0 291.7,729.0 290.8,727.9 289.9,726.9 289.0,725.8 288.1,724.7 287.2,723.6 286.3,722.5 285.4,721.4 284.5,720.3 283.6,719.2 282.7,718.1 281.7,716.9 280.8,715.8 279.9,714.6 278.9,713.4 278.0,712.2 277.0,711.0 276.1,709.8 275.1,708.6 274.1,707.4 273.2,706.1 272.2,704.9 271.2,703.6 270.2,702.3 269.2,701.1 268.2,699.8 267.2,698.5 266.1,697.1 265.1,695.8 264.1,694.5 263.0,693.2 262.0,691.8 260.9,690.5 259.8,689.1 258.8,687.7 257.7,686.3 256.6,684.9 255.5,683.5 254.4,682.1 253.3,680.6 252.1,679.2 251.0,677.7 249.9,676.2 248.8,674.7 247.6,673.2 246.5,671.7 245.3,670.2 244.2,668.6 243.0,667.1 241.8,665.5 240.7,663.9 239.5,662.3 238.3,660.7 237.1,659.0 235.9,657.4 234.7,655.7 233.5,654.0 232.3,652.3 231.1,650.6 229.8,648.9 228.6,647.2 227.4,645.4 226.1,643.6 224.9,641.8 223.7,640.0 222.4,638.1 221.2,636.2 220.0,634.3 218.7,632.4 217.5,630.5 216.2,628.5 215.0,626.6 213.7,624.6 212.5,622.5 211.2,620.5 210.0,618.4 208.7,616.3 207.5,614.2 206.2,612.0 205.0,609.8 203.7,607.6 202.5,605.4 201.2,603.2 200.0,600.9 198.8,598.5 197.5,596.2 196.3,593.8 195.1,591.4 193.8,589.0 192.6,586.5 191.4,584.0 190.2,581.5 188.9,578.9 187.7,576.3 186.5,573.6 185.3,571.0 184.1,568.2 182.9,565.5 181.7,562.7 180.6,559.9 179.4,557.0 178.2,554.1 177.1,551.1 176.0,548.1 174.8,545.0 173.7,541.9 172.6,538.8 171.5,535.6 170.4,532.3 169.4,529.0 168.3,525.6 167.3,522.2 166.2,518.8 165.2,515.2 164.2,511.7 163.2,508.0 162.2,504.3 161.2,500.6 160.3,496.7 159.4,492.8 158.5,488.9 157.6,484.8 156.8,480.7 156.0,476.4 155.2,472.1 154.5,467.7 153.8,463.2 153.2,458.6 152.6,453.8 152.0,449.0 151.5,444.0 151.1,439.0 150.7,433.8 150.3,428.5 150.0,423.1 149.7,417.6 149.5,411.9 149.4,406.1 149.3,400.1 149.3,394.0 149.4,387.7 149.6,381.2 149.9,374.5 150.3,367.6 150.8,360.5 151.4,353.1 152.2,345.5 153.2,337.7 154.3,329.5 155.6,321.0 157.1,312.2 158.8,303.1 160.6,293.6 162.7,283.9 165.0,273.7 167.5,263.1 170.3,252.1 173.3,240.7 176.7,228.7 180.4,216.3 184.4,203.2 188.8,189.6 193.7,175.2 199.1,160.2 204.9,144.3 211.4,127.6 218.5,109.9 226.3,91.1 234.9,71.2 244.5,50.0 255.1,27.3" fill="none" stroke="#00009a" stroke-width="1" />
<polyline points="368.0,751.0 367.4,750.1 366.8,749.2 366.3,748.3 365.7,747.4 365.1,746.5 364.5,745.6 364.0,744.7 363.4,743.8 362.8,742.8 362.2,741.9 361.6,741.0 361.0,740.0 360.4,739.0 359.8,738.1 359.2,737.1 358.6,736.1 357.9,735.1 357.3,734.1 356.7,733.1 356.0,732.1 355.4,731.1 354.7,730.0 354.1,729.0 353.4,727.9 352.8,726.9 352.1,725.8 351.4,724.7 350.8,723.6 350.1,722.5 349.4,721.4 348.7,720.3 348.0,719.2 347.3,718.1 346.6,716.9 345.9,715.8 345.2,714.6 344.5,713.4 343.7,712.2 343.0,711.0 342.3,709.8 341.5,708.6 340.8,707.4 340.0,706.1 339.2,704.9 338.5,703.6 337.7,702.3 336.9,701.1 336.1,699.8 335.3,698.5 334.5,697.1 333.6,695.8 332.8,694.5 332.0,693.2 331.1,691.8 330.2,690.5 329.4,689.1 328.5,687.7 327.6,686.3 326.7,684.9 325.8,683.5 324.8,682.1 323.9,680.6 323.0,679.2 322.0,677.7 321.1,676.2 320.1,674.7 319.1,673.2 318.1,671.7 317.1,670.2 316.1,668.6 315.1,667.1 314.1,665.5 313.0,663.9 312.0,662.3 310.9,660.7 309.9,659.0 308.8,657.4 307.7,655.7 306.6,654.0 305.5,652.3 304.4,650.6 303.2,648.9 302.1,647.2 301.0,645.4 299.8,643.6 298.6,641.8 297.5,640.0 296.3,638.1 295.1,636.2 293.9,634.3 292.7,632.4 291.5,630.5 290.3,628.5 289.1,626.6 287.8,624.6 286.6,622.5 285.3,620.5 284.1,618.4 282.8,616.3 281.6,614.2 280.3,612.0 279.0,609.8 277.7,607.6 276.5,605.4 275.2,603.2 273.9,600.9 272.6,598.5 271.3,596.2 270.0,593.8 268.6,591.4 267.3,589.0 266.0,586.5 264.7,584.0 263.4,581.5 262.0,578.9 260.7,576.3 259.4,573.6 258.1,571.0 256.7,568.2 255.4,565.5 254.1,562.7 252.8,559.9 251.4,557.0 250.1,554.1 248.8,551.1 247.5,548.1 246.2,545.0 244.9,541.9 243.6,538.8 242.3,535.6 241.0,532.3 239.7,529.0 238.5,525.6 237.2,522.2 235.9,518.8 234.7,515.2 233.5,511.7 232.2,508.0 231.0,504.3 229.8,500.6 228.6,496.7 227.4,492.8 226.3,488.9 225.2,484.8 224.1,480.7 223.0,476.4 221.9,472.1 220.9,467.7 220.0,463.2 219.0,458.6 218.1,453.8 217.3,449.0 216.5,444.0 215.8,439.0 215.0,433.8 214.3,428.5 213.7,423.1 213.1,417.6 212.6,411.9 212.1,406.1 211.7,400.1 211.3,394.0 211.1,387.7 210.9,381.2 210.8,374.5 210.8,367.6 211.0,360.5 211.2,353.1 211.6,345.5 212.2,337.7 212.9,329.5 213.8,321.0 214.9,312.2 216.1,303.1 217.5,293.6 219.2,283.9 221.0,273.7 223.1,263.1 225.4,252.1 227.9,240.7 230.8,228.7 234.0,216.3 237.5,203.2 241.4,189.6 245.7,175.2 250.5,160.2 255.8,144.3 261.7,127.6 268.2,109.9 275.4,91.1 283.4,71.2 292.3,50.0 302.1,27.3" fill="none" stroke="#00009a" stroke-width="1" />
<polyline points="425.2,751.0 424.8,750.1 424.5,749.2 424.1,748.3 423.8,747.4 423.5,746.5 423.1,745.6 422.8,744.7 422.4,743.8 422.1,742.8 421.7,741.9 421.4,741.0 421.0,740.0 420.6,739.0 420.3,738.1 419.9,737.1 419.6,736.1 419.2,735.1 418.8,734.1 418.5,733.1 418.1,732.1 417.7,731.1 417.3,730.0 417.0,729.0 416.6,727.9 416.2,726.9 415.8,725.8 415.4,724.7 415.0,723.6 414.6,722.5 414.2,721.4 413.8,720.3 413.4,719.2 413.0,718.1 412.6,716.9 412.2,715.8 411.8,714.6 411.4,713.4 411.0,712.2 410.6,711.0 410.1,709.8 409.7,708.6 409.3,707.4 408.8,706.1 408.4,704.9 408.0,703.6 407.5,702.3 407.1,701.1 406.6,699.8 406.1,698.5 405.6,697.1 405.2,695.8 404.7,694.5 404.2,693.2 403.7,691.8 403.2,690.5 402.6,689.1 402.1,687.7 401.6,686.3 401.0,684.9 400.5,683.5 399.9,682.1 399.3,680.6 398.8,679.2 398.2,677.7 397.6,676.2 397.0,674.7 396.4,673.2 395.8,671.7 395.1,670.2 394.5,668.6 393.8,667.1 393.2,665.5 392.5,663.9 391.9,662.3 391.2,660.7 390.5,659.0 389.8,657.4 389.0,655.7 388.3,654.0 387.6,652.3 386.8,650.6 386.1,648.9 385.3,647.2 384.5,645.4 383.7,643.6 382.9,641.8 382.1,640.0 381.2,638.1 380.4,636.2 379.5,634.3 378.7,632.4 377.8,630.5 376.9,628.5 376.0,626.6 375.1,624.6 374.2,622.5 373.2,620.5 372.3,618.4 371.3,616.3 370.3,614.2 369.3,612.0 368.3,609.8 367.3,607.6 366.2,605.4 365.2,603.2 364.1,600.9 363.0,598.5 362.0,596.2 360.8,593.8 359.7,591.4 358.6,589.0 357.4,586.5 356.3,584.0 355.1,581.5 353.9,578.9 352.7,576.3 351.5,573.6 350.2,571.0 349.0,568.2 347.7,565.5 346.5,562.7 345.2,559.9 343.9,557.0 342.6,554.1 341.2,551.1 339.9,548.1 338.6,545.0 337.2,541.9 335.9,538.8 334.5,535.6 333.2,532.3 331.8,529.0 330.4,525.6 329.0,522.2 327.6,518.8 326.2,515.2 324.8,511.7 323.4,508.0 322.0,504.3 320.6,500.6 319.2,496.7 317.8,492.8 316.4,488.9 315.0,484.8 313.7,480.7 312.3,476.4 311.0,472.1 309.7,467.7 308.4,463.2 307.1,458.6 305.9,453.8 304.7,449.0 303.6,444.0 302.4,439.0 301.3,433.8 300.3,428.5 299.2,423.1 298.2,417.6 297.3,411.9 296.4,406.1 295.5,400.1 294.7,394.0 294.0,387.7 293.4,381.2 292.8,374.5 292.3,367.6 292.0,360.5 291.7,353.1 291.6,345.5 291.6,337.7 291.8,329.5 292.2,321.0 292.7,312.2 293.4,303.1 294.2,293.6 295.2,283.9 296.5,273.7 297.9,263.1 299.6,252.1 301.5,240.7 303.7,228.7 306.2,216.3 309.0,203.2 312.2,189.6 315.8,175.2 319.9,160.2 324.4,144.3 329.5,127.6 335.1,109.9 341.5,91.1 348.6,71.2 356.6,50.0 365.5,27.3" fill="none" stroke="#00009a" stroke-width="1" />
<polyline points="482.7,751.0 482.5,750.1 482.4,749.2 482.3,748.3 482.1,747.4 482.0,746.5 481.8,745.6 481.7,744.7 481.6,743.8 481.4,742.8 481.3,741.9 481.1,741.0 481.0,740.0 480.9,739.0 480.7,738.1 480.6,737.1 480.5,736.1 480.3,735.1 480.2,734.1 480.1,733.1 479.9,732.1 479.8,731.1 479.7,730.0 479.5,729.0 479.4,727.9 479.3,726.9 479.2,725.8 479.0,724.7 478.9,723.6 478.8,722.5 478.7,721.4 478.5,720.3 478.4,719.2 478.3,718.1 478.2,716.9 478.1,715.8 477.9,714.6 477.8,713.4 477.7,712.2 477.6,711.0 477.5,709.8 477.4,708.6 477.3,707.4 477.2,706.1 477.0,704.9 476.9,703.6 476.8,702.3 476.7,701.1 476.6,699.8 476.5,698.5 476.3,697.1 476.2,695.8 476.1,694.5 476.0,693.2 475.8,691.8 475.7,690.5 475.6,689.1 475.4,687.7 475.3,686.3 475.1,684.9 475.0,683.5 474.8,682.1 474.7,680.6 474.5,679.2 474.4,677.7 474.2,676.2 474.1,674.7 473.9,673.2 473.7,671.7 473.6,670.2 473.4,668.6 473.2,667.1 473.0,665.5 472.9,663.9 472.7,662.3 472.5,660.7 472.3,659.0 472.1,657.4 471.9,655.7 471.7,654.0 471.5,652.3 471.3,650.6 471.1,648.9 470.9,647.2 470.6,645.4 470.4,643.6 470.2,641.8 469.9,640.0 469.7,638.1 469.5,636.2 469.2,634.3 469.0,632.4 468.7,630.5 468.4,628.5 468.2,626.6 467.9,624.6 467.6,622.5 467.3,620.5 467.0,618.4 466.7,616.3 466.4,614.2 466.1,612.0 465.8,609.8 465.5,607.6 465.1,605.4 464.8,603.2 464.4,600.9 464.0,598.5 463.7,596.2 463.3,593.8 462.9,591.4 462.5,589.0 462.0,586.5 461.6,584.0 461.1,581.5 460.7,578.9 460.2,576.3 459.7,573.6 459.2,571.0 458.7,568.2 458.1,565.5 457.5,562.7 457.0,559.9 456.4,557.0 455.7,554.1 455.1,551.1 454.5,548.1 453.8,545.0 453.1,541.9 452.4,538.8 451.6,535.6 450.9,532.3 450.1,529.0 449.3,525.6 448.4,522.2 447.6,518.8 446.7,515.2 445.7,511.7 444.8,508.0 443.8,504.3 442.8,500.6 441.7,496.7 440.7,492.8 439.6,488.9 438.5,484.8 437.4,480.7 436.2,476.4 435.1,472.1 433.9,467.7 432.7,463.2 431.5,458.6 430.3,453.8 429.1,449.0 427.9,444.0 426.7,439.0 425.5,433.8 424.2,428.5 423.0,423.1 421.7,417.6 420.5,411.9 419.3,406.1 418.0,400.1 416.9,394.0 415.7,387.7 414.6,381.2 413.5,374.5 412.5,367.6 411.6,360.5 410.8,353.1 410.0,345.5 409.4,337.7 408.9,329.5 408.5,321.0 408.3,312.2 408.2,303.1 408.2,293.6 408.4,283.9 408.8,273.7 409.4,263.1 410.1,252.1 411.1,240.7 412.3,228.7 413.9,216.3 415.7,203.2 417.8,189.6 420.3,175.2 423.3,160.2 426.6,144.3 430.5,127.6 435.0,109.9 440.1,91.1 445.9,71.2 452.5,50.0 460.1,27.3" fill="none" stroke="#00009a" stroke-width="1" />
<polyline points="540.8,751.0 540.8,750.1 540.8,749.2 540.8,748.3 540.8,747.4 540.9,746.5 540.9,745.6 540.9,744.7 540.9,743.8 540.9,742.8 540.9,741.9 541.0,741.0 541.0,740.0 541.0,739.0 541.1,738.1 541.1,737.1 541.1,736.1 541.2,735.1 541.2,734.1 541.3,733.1 541.3,732.1 541.4,731.1 541.4,730.0 541.5,729.0 541.5,727.9 541.6,726.9 541.7,725.8 541.7,724.7 541.8,723.6 541.9,722.5 542.0,721.4 542.0,720.3 542.1,719.2 542.2,718.1 542.3,716.9 542.4,715.8 542.5,714.6 542.6,713.4 542.7,712.2 542.9,711.0 543.0,709.8 543.1,708.6 543.2,707.4 543.4,706.1 543.5,704.9 543.6,703.6 543.8,702.3 543.9,701.1 544.0,699.8 544.2,698.5 544.3,697.1 544.5,695.8 544.6,694.5 544.8,693.2 544.9,691.8 545.0,690.5 545.2,689.1 545.4,687.7 545.5,686.3 545.7,684.9 545.8,683.5 546.0,682.1 546.2,680.6 546.3,679.2 546.5,677.7 546.7,676.2 546.8,674.7 547.0,673.2 547.2,671.7 547.4,670.2 547.6,668.6 547.8,667.1 548.0,665.5 548.2,663.9 548.4,662.3 548.6,660.7 548.8,659.0 549.0,657.4 549.2,655.7 549.4,654.0 549.7,652.3 549.9,650.6 550.1,648.9 550.3,647.2 550.6,645.4 550.8,643.6 551.1,641.8 551.3,640.0 551.6,638.1 551.8,636.2 552.1,634.3 552.4,632.4 552.6,630.5 552.9,628.5 553.2,626.6 553.5,624.6 553.8,622.5 554.1,620.5 554.4,618.4 554.7,616.3 555.1,614.2 555.4,612.0 555.7,609.8 556.1,607.6 556.4,605.4 556.7,603.2 557.1,600.9 557.5,598.5 557.8,596.2 558.2,593.8 558.6,591.4 558.9,589.0 559.3,586.5 559.7,584.0 560.1,581.5 560.5,578.9 560.9,576.3 561.3,573.6 561.8,571.0 562.2,568.2 562.6,565.5 563.0,562.7 563.5,559.9 563.9,557.0 564.4,554.1 564.8,551.1 565.3,548.1 565.7,545.0 566.2,541.9 566.7,538.8 567.1,535.6 567.6,532.3 568.1,529.0 568.6,525.6 569.1,522.2 569.6,518.8 570.0,515.2 570.5,511.7 571.0,508.0 571.4,504.3 571.9,500.6 572.4,496.7 572.9,492.8 573.3,488.9 573.8,484.8 574.3,480.7 574.7,476.4 575.2,472.1 575.7,467.7 576.2,463.2 576.7,458.6 577.2,453.8 577.7,449.0 578.1,444.0 578.6,439.0 579.1,433.8 579.5,428.5 579.9,423.1 580.3,417.6 580.7,411.9 581.0,406.1 581.4,400.1 581.7,394.0 582.0,387.7 582.2,381.2 582.5,374.5 582.7,367.6 583.0,360.5 583.2,353.1 583.4,345.5 583.6,337.7 583.9,329.5 584.1,321.0 584.4,312.2 584.6,303.1 584.9,293.6 585.1,283.9 585.4,273.7 585.7,263.1 586.1,252.1 586.6,240.7 587.1,228.7 587.8,216.3 588.6,203.2 589.6,189.6 590.8,175.2 592.3,160.2 594.2,144.3 596.4,127.6 599.1,109.9 602.3,91.1 606.1,71.2 610.6,50.0 616.0,27.3" fill="none" stroke="#00009a" stroke-width="1" />
<polyline points="599.6,751.0 599.7,750.1 599.8,749.2 599.9,748.3 600.0,747.4 600.1,746.5 600.2,745.6 600.4,744.7 600.5,743.8 600.6,742.8 600.7,741.9 600.9,741.0 601.0,740.0 601.1,739.0 601.3,738.1 601.4,737.1 601.6,736.1 601.7,735.1 601.9,734.1 602.1,733.1 602.2,732.1 602.4,731.1 602.6,730.0 602.7,729.0 602.9,727.9 603.1,726.9 603.3,725.8 603.5,724.7 603.7,723.6 603.9,722.5 604.1,721.4 604.3,720.3 604.5,719.2 604.8,718.1 605.0,716.9 605.2,715.8 605.5,714.6 605.7,713.4 606.0,712.2 606.2,711.0 606.5,709.8 606.8,708.6 607.0,707.4 607.3,706.1 607.6,704.9 607.9,703.6 608.2,702.3 608.5,701.1 608.8,699.8 609.1,698.5 609.4,697.1 609.7,695.8 610.0,694.5 610.3,693.2 610.6,691.8 611.0,690.5 611.3,689.1 611.6,687.7 612.0,686.3 612.3,684.9 612.7,683.5 613.0,682.1 613.4,680.6 613.7,679.2 614.1,677.7 614.5,676.2 614.8,674.7 615.2,673.2 615.6,671.7 616.0,670.2 616.4,668.6 616.8,667.1 617.3,665.5 617.7,663.9 618.1,662.3 618.5,660.7 619.0,659.0 619.4,657.4 619.9,655.7 620.4,654.0 620.8,652.3 621.3,650.6 621.8,648.9 622.3,647.2 622.8,645.4 623.3,643.6 623.8,641.8 624.3,640.0 624.9,638.1 625.4,636.2 626.0,634.3 626.6,632.4 627.2,630.5 627.8,628.5 628.4,626.6 629.0,624.6 629.6,622.5 630.2,620.5 630.9,618.4 631.6,616.3 632.2,614.2 632.9,612.0 633.6,609.8 634.3,607.6 635.1,605.4 635.8,603.2 636.6,600.9 637.3,598.5 638.1,596.2 638.9,593.8 639.7,591.4 640.5,589.0 641.4,586.5 642.2,584.0 643.1,581.5 644.0,578.9 644.9,576.3 645.8,573.6 646.8,571.0 647.7,568.2 648.7,565.5 649.7,562.7 650.7,559.9 651.8,557.0 652.8,554.1 653.9,551.1 655.0,548.1 656.1,545.0 657.3,541.9 658.4,538.8 659.6,535.6 660.9,532.3 662.1,529.0 663.4,525.6 664.7,522.2 666.0,518.8 667.3,515.2 668.7,511.7 670.1,508.0 671.5,504.3 672.9,500.6 674.4,496.7 675.9,492.8 677.5,488.9 679.1,484.8 680.7,480.7 682.4,476.4 684.1,472.1 685.9,467.7 687.7,463.2 689.6,458.6 691.5,453.8 693.5,449.0 695.6,444.0 697.7,439.0 699.8,433.8 702.0,428.5 704.3,423.1 706.6,417.6 709.0,411.9 711.4,406.1 714.0,400.1 716.6,394.0 719.3,387.7 722.0,381.2 724.9,374.5 727.9,367.6 731.0,360.5 734.2,353.1 737.5,345.5 741.0,337.7 744.7,329.5 748.5,321.0 752.4,312.2 756.5,303.1 760.8,293.6 765.2,283.9 769.7,273.7 774.5,263.1 779.3,252.1 784.4,240.7 789.7,228.7 795.2,216.3 800.9,203.2 806.8,189.6 812.9,175.2 819.2,160.2 825.8,144.3 832.6,127.6 839.7,109.9 847.0,91.1 854.6,71.2 862.4,50.0 870.6,27.3" fill="none" stroke="#00009a" stroke-width="1" />
<polyline points="658.9,751.0 659.0,750.1 659.2,749.2 659.4,748.3 659.5,747.4 659.7,746.5 659.9,745.6 660.1,744.7 660.2,743.8 660.4,742.8 660.6,741.9 660.8,741.0 661.0,740.0 661.2,739.0 661.4,738.1 661.6,737.1 661.8,736.1 662.1,735.1 662.3,734.1 662.5,733.1 662.7,732.1 663.0,731.1 663.2,730.0 663.5,729.0 663.7,727.9 664.0,726.9 664.2,725.8 664.5,724.7 664.8,723.6 665.0,722.5 665.3,721.4 665.6,720.3 665.9,719.2 666.2,718.1 666.5,716.9 666.8,715.8 667.1,714.6 667.5,713.4 667.8,712.2 668.1,711.0 668.5,709.8 668.8,708.6 669.2,707.4 669.5,706.1 669.9,704.9 670.3,703.6 670.7,702.3 671.0,701.1 671.4,699.8 671.8,698.5 672.2,697.1 672.6,695.8 673.0,694.5 673.4,693.2 673.8,691.8 674.3,690.5 674.7,689.1 675.1,687.7 675.6,686.3 676.0,684.9 676.4,683.5 676.9,682.1 677.4,680.6 677.8,679.2 678.3,677.7 678.8,676.2 679.3,674.7 679.7,673.2 680.2,671.7 680.8,670.2 681.3,668.6 681.8,667.1 682.3,665.5 682.9,663.9 683.4,662.3 684.0,660.7 684.5,659.0 685.1,657.4 685.7,655.7 686.3,654.0 686.9,652.3 687.5,650.6 688.1,648.9 688.7,647.2 689.4,645.4 690.0,643.6 690.7,641.8 691.3,640.0 692.0,638.1 692.7,636.2 693.4,634.3 694.2,632.4 694.9,630.5 695.6,628.5 696.4,626.6 697.2,624.6 698.0,622.5 698.8,620.5 699.6,618.4 700.4,616.3 701.3,614.2 702.1,612.0 703.0,609.8 703.9,607.6 704.8,605.4 705.7,603.2 706.7,600.9 707.6,598.5 708.6,596.2 709.6,593.8 710.6,591.4 711.6,589.0 712.7,586.5 713.8,584.0 714.9,581.5 716.0,578.9 717.1,576.3 718.3,573.6 719.4,571.0 720.6,568.2 721.9,565.5 723.1,562.7 724.4,559.9 725.7,557.0 727.0,554.1 728.3,551.1 729.7,548.1 731.1,545.0 732.6,541.9 734.0,538.8 735.5,535.6 737.1,532.3 738.6,529.0 740.2,525.6 741.9,522.2 743.5,518.8 745.2,515.2 746.9,511.7 748.7,508.0 750.5,504.3 752.3,500.6 754.2,496.7 756.1,492.8 758.1,488.9 760.1,484.8 762.2,480.7 764.3,476.4 766.5,472.1 768.8,467.7 771.1,463.2 773.5,458.6 776.0,453.8 778.6,449.0 781.2,444.0 783.9,439.0 786.7,433.8 789.5,428.5 792.5,423.1 795.5,417.6 798.6,411.9 801.8,406.1 805.1,400.1 808.5,394.0 812.0,387.7 815.7,381.2 819.5,374.5 823.4,367.6 827.5,360.5 831.8,353.1 836.3,345.5 840.9,337.7 845.8,329.5 850.9,321.0 856.3,312.2 861.8,303.1 867.6,293.6 873.7,283.9 880.0,273.7 886.6,263.1 893.5,252.1 900.8,240.7 908.4,228.7 916.4,216.3 924.8,203.2 933.6,189.6 943.0,175.2 952.9,160.2 963.3,144.3 974.4,127.6 986.2,109.9 998.8,91.1 1012.3,71.2 1026.7,50.0 1042.2,27.3" fill="none" stroke="#00009a" stroke-width="1" />
<line x1="121.5" y1="50" x2="121.5" y2="749" stroke="#006000" stroke-width="1"/>
<line x1="181.5" y1="50" x2="181.5" y2="749" stroke="#006000" stroke-width="1"/>
<line x1="241.5" y1="50" x2="241.5" y2="749" stroke="#006000" stroke-width="1"/>
<line x1="301.5" y1="50" x2="301.5" y2="749" stroke="#006000" stroke-width="1"/>
<line x1="361.5" y1="50" x2="361.5" y2="749" stroke="#006000" stroke-width="1"/>
<line x1="421.5" y1="50" x2="421.5" y2="749" stroke="#006000" stroke-width="1"/>
<line x1="481.5" y1="50" x2="481.5" y2="749" stroke="#006000" stroke-width="1"/>
<line x1="541.5" y1="50" x2="541.5" y2="749" stroke="#006000" stroke-width="1"/>
<line x1="601.5" y1="50" x2="601.5" y2="749" stroke="#006000" stroke-width="1"/>
<line x1="-859" y1="760" x2="-79" y2="-20" stroke="#ffffff" stroke-width="1"/>
<line x1="-799" y1="760" x2="-19" y2="-20" stroke="#ffffff" stroke-width="1"/>
<line x1="-739" y1="760" x2="41" y2="-20" stroke="#ffffff" stroke-width="1"/>
<line x1="-679" y1="760" x2="101" y2="-20" stroke="#ffffff" stroke-width="1"/>
<line x1="-619" y1="760" x2="161" y2="-20" stroke="#ffffff" stroke-width="1"/>
<line x1="-559" y1="760" x2="221" y2="-20" stroke="#ffffff" stroke-width="1"/>
<line x1="-499" y1="760" x2="281" y2="-20" stroke="#ffffff" stroke-width="1"/>
<line x1="-439" y1="760" x2="341" y2="-20" stroke="#ffffff" stroke-width="1"/>
<line x1="-379" y1="760" x2="401" y2="-20" stroke="#ffffff" stroke-width="1"/>
<line x1="-319" y1="760" x2="461" y2="-20" stroke="#ffffff" stroke-width="1"/>
<line x1="-259" y1="760" x2="521" y2="-20" stroke="#ffffff" stroke-width="1"/>
<line x1="-199" y1="760" x2="581" y2="-20" stroke="#ffffff" stroke-width="1"/>
<line x1="-139" y1="760" x2="641" y2="-20" stroke="#ffffff" stroke-width="1"/>
<line x1="-79" y1="760" x2="701" y2="-20" stroke="#ffffff" stroke-width="1"/>
<line x1="-19" y1="760" x2="761" y2="-20" stroke="#ffffff" stroke-width="1"/>
<line x1="41" y1="760" x2="821" y2="-20" stroke="#ffffff" stroke-width="1"/>
<line x1="101" y1="760" x2="881" y2="-20" stroke="#ffffff" stroke-width="1"/>
<line x1="161" y1="760" x2="941" y2="-20" stroke="#ffffff" stroke-width="1"/>
<line x1="221" y1="760" x2="1001" y2="-20" stroke="#ffffff" stroke-width="1"/>
<line x1="281" y1="760" x2="1061" y2="-20" stroke="#ffffff" stroke-width="1"/>
<line x1="341" y1="760" x2="1121" y2="-20" stroke="#ffffff" stroke-width="1"/>
<line x1="401" y1="760" x2="1181" y2="-20" stroke="#ffffff" stroke-width="1"/>
<line x1="461" y1="760" x2="1241" y2="-20" stroke="#ffffff" stroke-width="1"/>
<line x1="521" y1="760" x2="1301" y2="-20" stroke="#ffffff" stroke-width="1"/>
<line x1="581" y1="760" x2="1361" y2="-20" stroke="#ffffff" stroke-width="1"/>
<line x1="641" y1="760" x2="1421" y2="-20" stroke="#ffffff" stroke-width="1"/>
<line x1="701" y1="760" x2="1481" y2="-20" stroke="#ffffff" stroke-width="1"/></g>
<path d="M146,652.5h5M148.5,650v5M155,653.5h5M157.5,651v5M143,665.5h5M145.5,663v5M211,682.5h5M213.5,680v5M414,698.5h5M416.5,696v5M161,704.5h5M163.5,702v5M258,720.5h5M260.5,718v5M571,725.5h5M573.5,723v5M60,683.5h5M62.5,681v5M77,682.5h5M79.5,680v5M116,684.5h5M118.5,682v5" stroke="#fff" stroke-width="1" fill="none" shape-rendering="crispEdges"/><path d="M276,684.5h5M278.5,682v5M78,698.5h5M80.5,696v5M88,698.5h5M90.5,696v5M129,704.5h5M131.5,702v5M149,704.5h5M151.5,702v5M187,720.5h5M189.5,718v5M136,732.5h5M138.5,730v5" stroke="#fff" stroke-width="1" fill="none" shape-rendering="crispEdges"/><path d="M209,733.5h5M211.5,731v5M212,724.5h5M214.5,722v5M210,721.5h5M212.5,719v5M209,714.5h5M211.5,712v5M224,698.5h5M226.5,696v5" stroke="#fff" stroke-width="1" fill="none" shape-rendering="crispEdges"/>
<polyline points="62.3,645.5 79.8,681.5 80.0,682.9 278.5,683.9" fill="none" stroke="#ff8000" stroke-width="1" stroke-linejoin="miter" shape-rendering="crispEdges"/>
<polyline points="80.0,697.8 91.7,697.8 153.2,692.7 205.9,689.0 258.7,684.8 278.5,683.9" fill="none" stroke="#ff8000" stroke-width="1" stroke-linejoin="miter" shape-rendering="crispEdges"/>
<polyline points="80.0,697.8 131.2,703.7 150.2,705.1 189.8,719.8 138.5,732.2" fill="none" stroke="#ff8000" stroke-width="1" stroke-linejoin="miter" shape-rendering="crispEdges"/>
<polyline points="62.0,643.6 125.0,649.3 148.0,651.6 157.0,652.6 144.7,665.4 178.0,673.9 213.2,682.4" fill="none" stroke="#ffff00" stroke-width="1" stroke-linejoin="miter" shape-rendering="crispEdges"/>
<polyline points="61.0,683.3 213.2,683.3" fill="none" stroke="#ffff00" stroke-width="1" stroke-linejoin="miter" shape-rendering="crispEdges"/>
<polyline points="100.6,685.2 192.7,688.3 258.0,691.2 285.8,692.7 416.1,698.5" fill="none" stroke="#ffff00" stroke-width="1" stroke-linejoin="miter" shape-rendering="crispEdges"/>
<polyline points="162.7,704.5 258.0,702.2 309.2,700.7 351.7,700.0 416.0,698.5" fill="none" stroke="#ffff00" stroke-width="1" stroke-linejoin="miter" shape-rendering="crispEdges"/>
<polyline points="184.0,705.1 258.0,719.0 260.2,720.5 458.0,721.2 572.6,725.3 661.0,731.6" fill="none" stroke="#ffff00" stroke-width="1" stroke-linejoin="miter" shape-rendering="crispEdges"/>
<polyline points="211.3,732.8 213.6,724.2 210.7,713.7 207.2,708.2 226.3,698.1 240.2,683.0 244.3,657.6" fill="none" stroke="#c8c800" stroke-width="1" stroke-linejoin="miter" shape-rendering="crispEdges"/>
<rect x="240.3" y="653.6" width="8" height="8" fill="#c8c800"/><text x="244.3" y="660.6" fill="#404000" font-size="8" text-anchor="middle">3</text>
<rect x="236.2" y="679.0" width="8" height="8" fill="#c8c800"/><text x="240.2" y="686.0" fill="#404000" font-size="8" text-anchor="middle">2</text>
<rect x="203.2" y="704.2" width="8" height="8" fill="#c8c800"/><text x="207.2" y="711.2" fill="#404000" font-size="8" text-anchor="middle">1</text>
<path d="M518,720.5h5M520.5,718v5M534,732.5h5M536.5,730v5M531,725.5h5M533.5,723v5M546,724.5h5M548.5,722v5M559,732.5h5M561.5,730v5M490,731.5h5M492.5,729v5" stroke="#fff" stroke-width="1" fill="none" shape-rendering="crispEdges"/>
<polyline points="509.5,694.7 561.0,731.6" fill="none" stroke="#ffa0ff" stroke-width="1" stroke-linejoin="miter" shape-rendering="crispEdges"/>
<polyline points="502.5,709.0 536.4,731.9" fill="none" stroke="#ff00ff" stroke-width="1" stroke-linejoin="miter" shape-rendering="crispEdges"/>
<polyline points="502.5,709.0 492.2,731.1" fill="none" stroke="#ff00ff" stroke-width="1" stroke-linejoin="miter" shape-rendering="crispEdges"/>
<polyline points="519.3,50.0 509.8,85.4 501.0,114.8 492.2,167.9 487.7,226.8 486.3,285.8 486.2,300.0 487.7,317.7 489.2,341.3 493.6,373.7 498.0,412.0 501.0,439.3 502.0,440.0 510.2,528.0 510.8,636.0 509.5,694.7 561.0,731.6" fill="none" stroke="#ffa0ff" stroke-width="1" stroke-linejoin="miter" shape-rendering="crispEdges"/>
<polyline points="504.0,50.0 493.6,97.0 480.4,138.4 474.5,179.7 470.6,226.8 468.6,274.0 468.5,300.0 469.3,320.6 471.5,338.3 476.6,385.5 480.3,409.0 485.5,440.0 492.6,488.4 500.0,545.3 501.0,602.0 502.0,690.0 502.5,709.0" fill="none" stroke="#ff00ff" stroke-width="1" stroke-linejoin="miter" shape-rendering="crispEdges"/>
<polyline points="539.3,50.0 492.2,104.5 478.3,124.6 465.0,137.8 461.2,144.3 456.8,148.1 430.3,176.7 406.1,199.7 395.5,218.6 383.1,229.2 367.4,261.7 340.6,300.0 329.5,312.2 307.0,321.5 255.2,325.7 324.2,328.4 389.9,333.3 385.3,336.8 341.7,357.3 342.5,361.0 339.4,374.7 334.7,379.6 380.0,386.3 378.3,394.3 385.3,400.0 393.7,416.2 390.1,426.3 389.9,441.0 341.0,444.5 366.3,448.6 353.7,449.5 324.2,455.4 383.2,456.3 339.0,461.0 345.3,477.9 345.3,485.3 335.8,507.4 316.8,528.4 310.5,559.6 344.2,574.3 352.6,575.8 388.4,585.3 393.7,607.4 398.9,612.2 406.3,613.7 346.7,617.5 424.2,621.1 423.7,624.3 451.0,626.5 456.1,630.2 462.0,634.6 431.8,635.4 420.0,635.4 420.0,639.8 456.8,643.5 471.6,651.6 477.5,651.6 467.9,664.1 470.1,683.3 445.1,683.3 485.6,698.0 458.3,704.6 462.7,706.8 464.9,720.1 470.1,720.1 492.2,723.8 493.7,731.9" fill="none" stroke="#00ffff" stroke-width="1" stroke-linejoin="miter" shape-rendering="crispEdges"/>
<polyline points="661.0,95.7 654.2,104.5 635.1,124.6 629.2,137.8 625.4,144.3 618.0,148.1 577.6,176.7 564.4,199.7 549.6,218.6 544.3,229.2 531.9,261.6 522.5,278.4 512.0,300.7 503.2,312.5 492.1,321.4 486.9,325.3 472.2,329.5 456.0,332.7 454.5,337.6 447.2,356.7 444.9,361.2 428.0,374.4 425.1,379.6 415.5,386.2 414.7,394.3 414.4,400.2 414.0,413.5 414.4,416.4 417.0,426.0 418.5,442.0 416.8,449.5 417.9,455.8 418.9,461.0 424.2,479.0 426.3,485.3 434.7,507.4 445.3,530.5 455.4,559.6 452.6,574.7 457.5,585.3 467.8,607.4 466.3,613.7 465.3,617.9 465.7,626.5 470.1,634.6 475.3,637.6 472.3,643.5 476.7,651.6 487.8,666.3 499.6,682.5 508.4,694.3 532.7,720.1" fill="none" stroke="#ff0000" stroke-width="1" stroke-linejoin="miter" shape-rendering="crispEdges"/>
<polyline points="168.1,50.0 109.2,104.3 182.1,124.5 204.5,137.5 181.3,144.2 162.7,149.0 181.3,176.7 169.5,199.5 169.5,218.8 151.0,229.5 163.1,261.6 121.5,299.8 115.6,312.1 115.2,322.2 109.7,325.0 103.5,327.9 122.0,333.5 127.4,337.3 139.2,357.6 121.5,361.3 121.5,374.7 121.5,379.5 121.5,386.5 139.2,394.6 169.8,400.4 187.5,414.4 181.3,426.2 157.7,441.4 163.6,444.2 163.1,449.0 157.3,456.0 150.9,461.6 140.0,478.4 121.5,485.7 145.0,507.0 145.9,529.8 163.1,559.4 127.4,574.5 121.5,575.4 121.5,585.8 151.8,607.4 157.3,612.4 150.9,617.8 145.9,623.9 139.2,626.7 127.4,630.1 121.5,634.3 86.3,653.5 97.8,665.7 108.8,681.3 92.1,698.5 103.0,705.6 72.4,721.8 73.5,732.8" fill="none" stroke="#00ff00" stroke-width="1" stroke-linejoin="miter" shape-rendering="crispEdges"/>
<polyline points="166.9,50.0 103.5,104.3 182.1,124.5 204.5,137.5 175.4,143.9 157.7,148.6 182.6,176.7 176.2,199.5 169.5,218.8 146.7,229.5 166.9,261.1 113.6,300.1 127.0,312.8 131.1,320.8 128.7,327.6 151.0,333.5 156.3,337.3 153.5,357.6 129.0,360.9 103.5,374.4 113.1,379.5 121.5,386.5 128.2,394.4 150.6,400.4 164.8,414.4 156.3,426.2 135.8,441.4 140.8,444.2 139.5,449.0 132.8,456.0 128.2,461.6 114.2,478.4 103.5,485.7 117.3,506.2 117.6,529.8 136.1,559.4 100.4,574.5 94.5,575.4 96.2,585.8 122.3,607.4 128.7,612.8 124.0,617.8 119.8,623.9 113.9,625.9 107.2,630.1 97.4,634.0 94.5,635.7 62.5,646.0 66.6,652.4 70.0,665.3 96.1,682.5 110.6,698.5 132.0,705.6 106.0,720.1 83.4,725.3 101.3,732.3" fill="none" stroke="#ff0080" stroke-width="1" stroke-linejoin="miter" shape-rendering="crispEdges"/>
<line x1="61" y1="709.5" x2="625" y2="709.5" stroke="#ff00ff" stroke-width="1" shape-rendering="crispEdges"/>
</g>
<rect x="67.5" y="607.5" width="43" height="17" fill="#000" stroke="#ffff00" stroke-width="1" shape-rendering="crispEdges"/>
<text x="71.7" y="621" fill="#ffff00" font-size="13" textLength="35" lengthAdjust="spacingAndGlyphs">CAPE</text>
<rect x="67.5" y="636.5" width="57" height="17" fill="#000" stroke="#e07000" stroke-width="1.3" shape-rendering="crispEdges"/>
<text x="71.7" y="650" fill="#e07000" font-size="13" textLength="49.3" lengthAdjust="spacingAndGlyphs">CINH * 5</text>
<rect x="625.5" y="700.5" width="30" height="17" fill="#000" stroke="#ff00ff" stroke-width="1.3" shape-rendering="crispEdges"/>
<text x="629" y="714" fill="#ff00ff" font-size="13" textLength="22" lengthAdjust="spacingAndGlyphs">LCL</text>
<path d="M761.5,104.3L732.0,105.4M761.5,124.5L734.1,113.3M761.5,137.0L733.0,129.5M761.5,144.4L732.0,140.6M761.5,148.2L732.0,144.4M761.5,176.6L734.9,163.0M761.5,199.0L737.3,183.3M761.5,218.7L734.1,208.8M761.5,229.7L732.0,225.5M761.5,261.4L734.9,248.1M761.5,300.6L732.1,302.4M761.5,312.4L743.4,300.6M761.5,320.5L745.6,300.6M761.5,322.7L738.3,295.0M761.5,328.6L772.2,306.5M761.5,336.0L772.2,306.5M761.5,357.4L741.2,336.0M761.5,360.8L736.0,347.0M761.5,376.5L782.5,406.0M761.5,381.7L776.6,404.5M761.5,386.5L775.0,412.0M761.5,395.0L775.8,420.0M761.5,400.5L775.8,419.2M761.5,414.4L770.0,428.7M761.5,426.2L766.3,442.7M761.5,441.4L765.0,470.0M761.5,444.2L764.0,473.0M761.5,449.0L764.0,478.0M761.5,456.0L764.5,485.0M761.5,461.6L764.5,489.9M761.5,478.4L767.7,513.5M761.5,485.7L764.0,514.0M761.5,507.0L755.2,535.6M761.5,529.8L753.7,557.6M761.5,574.5L755.0,603.0M761.5,585.8L739.7,604.7M761.5,607.4L746.4,631.3M761.5,612.4L752.0,640.0M761.5,617.8L752.0,646.0M761.5,623.9L753.0,652.0M761.5,626.7L753.0,655.0M761.5,630.1L754.0,658.0M761.5,634.1L754.0,662.0M761.5,653.7L749.0,680.0M761.5,665.5L745.2,689.0M761.5,682.7L773.8,709.3M761.5,698.3L790.7,702.5M761.5,707.6L783.1,686.5M761.5,720.2L789.8,711.8M761.5,722.7L790.7,726.4M761.5,729.5L769.6,753.9M761.5,731.2L787.0,719.4" stroke="#fff" stroke-width="1" fill="none" shape-rendering="crispEdges"/>\n<path d="M826.5,104.3L802.1,88.1M826.5,124.5L803.0,107.1M826.5,137.0L800.2,124.3M826.5,144.4L798.9,133.4M826.5,148.2L799.5,136.5M826.5,176.6L804.2,158.1M826.5,199.0L807.0,177.0M826.5,218.7L803.0,202.2M826.5,229.7L800.2,216.0M826.5,261.4L805.0,242.3M826.5,300.6L800.2,287.1M826.5,312.4L813.0,286.0M826.5,320.5L812.0,294.0M826.5,328.6L838.5,306.5M826.5,336.0L838.5,306.5M826.5,357.4L813.4,331.3M826.5,360.8L810.2,338.2M826.5,374.3L854.7,393.5M826.5,380.2L844.4,397.9M826.5,385.8L853.2,393.5M826.5,395.0L849.5,411.2M826.5,400.8L850.3,411.8M826.5,414.0L840.7,425.8M826.5,426.0L836.3,440.5M826.5,441.0L837.7,469.3M826.5,444.0L837.0,472.2M826.5,449.0L835.5,476.6M826.5,456.0L834.0,484.0M826.5,461.0L836.3,488.4M826.5,478.0L844.4,509.0M826.5,485.0L831.1,507.6M826.5,507.0L821.5,536.0M826.5,530.0L821.5,558.3M826.5,574.5L822.0,603.0M826.5,586.3L799.4,598.1M826.5,607.4L810.5,631.3M826.5,612.0L818.0,640.0M826.5,617.8L820.0,646.0M826.5,624.0L822.0,652.0M826.5,626.7L829.0,655.0M826.5,630.0L834.0,658.0M826.5,634.0L838.0,660.0M826.5,645.3L851.3,637.7M826.5,653.7L838.0,680.0M826.5,665.5L800.0,679.0M826.5,683.2L853.8,694.1M826.5,698.3L853.0,684.8M826.5,706.7L845.4,682.3M826.5,721.0L847.1,699.2M826.5,725.3L848.8,705.9M826.5,732.0L847.1,701.7" stroke="#fff" stroke-width="1" fill="none" shape-rendering="crispEdges"/>
<line x1="56" y1="50.5" x2="666" y2="50.5" stroke="#ffffff" stroke-width="1" shape-rendering="crispEdges"/>
<line x1="56" y1="321.5" x2="666" y2="321.5" stroke="#ffffff" stroke-width="1" shape-rendering="crispEdges"/>
<line x1="56" y1="449.5" x2="666" y2="449.5" stroke="#ffffff" stroke-width="1" shape-rendering="crispEdges"/>
<line x1="56" y1="529.5" x2="666" y2="529.5" stroke="#ffffff" stroke-width="1" shape-rendering="crispEdges"/>
<line x1="56" y1="586.5" x2="666" y2="586.5" stroke="#ffffff" stroke-width="1" shape-rendering="crispEdges"/>
<line x1="56" y1="630.5" x2="666" y2="630.5" stroke="#ffffff" stroke-width="1" shape-rendering="crispEdges"/>
<line x1="56" y1="666.5" x2="666" y2="666.5" stroke="#ffffff" stroke-width="1" shape-rendering="crispEdges"/>
<line x1="56" y1="694.5" x2="666" y2="694.5" stroke="#ffffff" stroke-width="1" shape-rendering="crispEdges"/>
<line x1="56" y1="719.5" x2="666" y2="719.5" stroke="#ffffff" stroke-width="1" shape-rendering="crispEdges"/>
<line x1="56" y1="740.5" x2="666" y2="740.5" stroke="#ffffff" stroke-width="1" shape-rendering="crispEdges"/>
<g shape-rendering="crispEdges" stroke="#fff" stroke-width="1">
<line x1="61.5" y1="50" x2="61.5" y2="750"/>
<line x1="661.5" y1="50" x2="661.5" y2="750"/>
<line x1="61" y1="749.5" x2="662" y2="749.5"/>
<line x1="61.5" y1="749" x2="61.5" y2="755"/>
<line x1="61.5" y1="788" x2="61.5" y2="793"/>
<line x1="61.5" y1="826" x2="61.5" y2="831"/>
<line x1="121.5" y1="749" x2="121.5" y2="755"/>
<line x1="121.5" y1="788" x2="121.5" y2="793"/>
<line x1="121.5" y1="826" x2="121.5" y2="831"/>
<line x1="181.5" y1="749" x2="181.5" y2="755"/>
<line x1="181.5" y1="788" x2="181.5" y2="793"/>
<line x1="181.5" y1="826" x2="181.5" y2="831"/>
<line x1="241.5" y1="749" x2="241.5" y2="755"/>
<line x1="241.5" y1="788" x2="241.5" y2="793"/>
<line x1="241.5" y1="826" x2="241.5" y2="831"/>
<line x1="301.5" y1="749" x2="301.5" y2="755"/>
<line x1="301.5" y1="788" x2="301.5" y2="793"/>
<line x1="301.5" y1="826" x2="301.5" y2="831"/>
<line x1="361.5" y1="749" x2="361.5" y2="755"/>
<line x1="361.5" y1="788" x2="361.5" y2="793"/>
<line x1="361.5" y1="826" x2="361.5" y2="831"/>
<line x1="421.5" y1="749" x2="421.5" y2="755"/>
<line x1="421.5" y1="788" x2="421.5" y2="793"/>
<line x1="421.5" y1="826" x2="421.5" y2="831"/>
<line x1="481.5" y1="749" x2="481.5" y2="755"/>
<line x1="481.5" y1="788" x2="481.5" y2="793"/>
<line x1="481.5" y1="826" x2="481.5" y2="831"/>
<line x1="541.5" y1="749" x2="541.5" y2="755"/>
<line x1="541.5" y1="788" x2="541.5" y2="793"/>
<line x1="541.5" y1="826" x2="541.5" y2="831"/>
<line x1="601.5" y1="749" x2="601.5" y2="755"/>
<line x1="601.5" y1="788" x2="601.5" y2="793"/>
<line x1="601.5" y1="826" x2="601.5" y2="831"/>
<line x1="661.5" y1="749" x2="661.5" y2="755"/>
<line x1="661.5" y1="788" x2="661.5" y2="793"/>
<line x1="661.5" y1="826" x2="661.5" y2="831"/>
<line x1="61.5" y1="863" x2="61.5" y2="868"/>
<line x1="136.5" y1="863" x2="136.5" y2="868"/>
<line x1="211.5" y1="863" x2="211.5" y2="868"/>
<line x1="286.5" y1="863" x2="286.5" y2="868"/>
<line x1="361.5" y1="863" x2="361.5" y2="868"/>
<line x1="436.5" y1="863" x2="436.5" y2="868"/>
<line x1="511.5" y1="863" x2="511.5" y2="868"/>
<line x1="586.5" y1="863" x2="586.5" y2="868"/>
<line x1="661.5" y1="863" x2="661.5" y2="868"/>
</g>
<text x="53" y="55" fill="#fff" font-size="13" text-anchor="end">100</text>
<text x="53" y="326" fill="#fff" font-size="13" text-anchor="end">200</text>
<text x="53" y="454" fill="#fff" font-size="13" text-anchor="end">300</text>
<text x="53" y="534" fill="#fff" font-size="13" text-anchor="end">400</text>
<text x="53" y="591" fill="#fff" font-size="13" text-anchor="end">500</text>
<text x="53" y="635" fill="#fff" font-size="13" text-anchor="end">600</text>
<text x="53" y="671" fill="#fff" font-size="13" text-anchor="end">700</text>
<text x="53" y="699" fill="#fff" font-size="13" text-anchor="end">800</text>
<text x="53" y="724" fill="#fff" font-size="13" text-anchor="end">900</text>
<text x="53" y="745" fill="#fff" font-size="13" text-anchor="end" textLength="27" lengthAdjust="spacingAndGlyphs">1000</text>
<text x="670" y="55" fill="#fff" font-size="13">16719m</text>
<text x="670" y="326" fill="#fff" font-size="13">12286m</text>
<text x="670" y="454" fill="#fff" font-size="13">9605m</text>
<text x="670" y="534" fill="#fff" font-size="13">7561m</text>
<text x="670" y="591" fill="#fff" font-size="13">5876m</text>
<text x="670" y="635" fill="#fff" font-size="13">4441m</text>
<text x="670" y="671" fill="#fff" font-size="13">3186m</text>
<text x="670" y="699" fill="#fff" font-size="13">2061m</text>
<text x="670" y="724" fill="#fff" font-size="13">1042m</text>
<text x="58.6" y="768" fill="#fff" font-size="13" text-anchor="middle">-50</text>
<text x="118.6" y="768" fill="#fff" font-size="13" text-anchor="middle">-40</text>
<text x="178.6" y="768" fill="#fff" font-size="13" text-anchor="middle">-30</text>
<text x="238.6" y="768" fill="#fff" font-size="13" text-anchor="middle">-20</text>
<text x="298.6" y="768" fill="#fff" font-size="13" text-anchor="middle">-10</text>
<text x="361" y="768" fill="#fff" font-size="13" text-anchor="middle">0</text>
<text x="421" y="768" fill="#fff" font-size="13" text-anchor="middle">10</text>
<text x="481" y="768" fill="#fff" font-size="13" text-anchor="middle">20</text>
<text x="541" y="768" fill="#fff" font-size="13" text-anchor="middle">30</text>
<text x="601" y="768" fill="#fff" font-size="13" text-anchor="middle">40</text>
<text x="661" y="768" fill="#fff" font-size="13" text-anchor="middle">50</text>
<text x="61" y="806" fill="#fff" font-size="13" text-anchor="middle">0</text>
<text x="121" y="806" fill="#fff" font-size="13" text-anchor="middle">10</text>
<text x="181" y="806" fill="#fff" font-size="13" text-anchor="middle">20</text>
<text x="241" y="806" fill="#fff" font-size="13" text-anchor="middle">30</text>
<text x="301" y="806" fill="#fff" font-size="13" text-anchor="middle">40</text>
<text x="361" y="806" fill="#fff" font-size="13" text-anchor="middle">50</text>
<text x="421" y="806" fill="#fff" font-size="13" text-anchor="middle">60</text>
<text x="481" y="806" fill="#fff" font-size="13" text-anchor="middle">70</text>
<text x="541" y="806" fill="#fff" font-size="13" text-anchor="middle">80</text>
<text x="601" y="806" fill="#fff" font-size="13" text-anchor="middle">90</text>
<text x="661" y="806" fill="#fff" font-size="13" text-anchor="middle">100</text>
<text x="61" y="843" fill="#fff" font-size="13" text-anchor="middle">0</text>
<text x="121" y="843" fill="#fff" font-size="13" text-anchor="middle">300</text>
<text x="181" y="843" fill="#fff" font-size="13" text-anchor="middle">600</text>
<text x="241" y="843" fill="#fff" font-size="13" text-anchor="middle">900</text>
<text x="301" y="843" fill="#fff" font-size="13" text-anchor="middle">1200</text>
<text x="361" y="843" fill="#fff" font-size="13" text-anchor="middle">1500</text>
<text x="421" y="843" fill="#fff" font-size="13" text-anchor="middle">1800</text>
<text x="481" y="843" fill="#fff" font-size="13" text-anchor="middle">2100</text>
<text x="541" y="843" fill="#fff" font-size="13" text-anchor="middle">2400</text>
<text x="601" y="843" fill="#fff" font-size="13" text-anchor="middle">2700</text>
<text x="661" y="843" fill="#fff" font-size="13" text-anchor="middle">3000</text>
<text x="58.8" y="880" fill="#fff" font-size="13" text-anchor="middle">-100</text>
<text x="133.8" y="880" fill="#fff" font-size="13" text-anchor="middle">-50</text>
<text x="211" y="880" fill="#fff" font-size="13" text-anchor="middle">0</text>
<text x="286" y="880" fill="#fff" font-size="13" text-anchor="middle">50</text>
<text x="361" y="880" fill="#fff" font-size="13" text-anchor="middle">100</text>
<text x="436" y="880" fill="#fff" font-size="13" text-anchor="middle">150</text>
<text x="511" y="880" fill="#fff" font-size="13" text-anchor="middle">200</text>
<text x="586" y="880" fill="#fff" font-size="13" text-anchor="middle">250</text>
<text x="661" y="880" fill="#fff" font-size="13" text-anchor="middle">300</text>
<text x="361" y="781" fill="#fff" font-size="13" text-anchor="middle" textLength="172" lengthAdjust="spacingAndGlyphs">Temperature, Dewpoint  [ °C]</text>
<text x="361" y="819" fill="#fff" font-size="13" text-anchor="middle" textLength="107" lengthAdjust="spacingAndGlyphs">Windspeed  [ knt]</text>
<text x="361" y="857" fill="#fff" font-size="13" text-anchor="middle" textLength="138" lengthAdjust="spacingAndGlyphs">CAPE, CINH * 5  [ J/kg]</text>
<text x="361" y="893" fill="#fff" font-size="13" text-anchor="middle" textLength="204" lengthAdjust="spacingAndGlyphs">Storm Relative Helicity  [ m^2/s^2]</text>
<text x="62.5" y="29" fill="#fff" font-size="16.3" font-weight="bold" textLength="240.5" lengthAdjust="spacingAndGlyphs">Station: 06610 Payerne (LSMP)</text>
<text x="329.5" y="29" fill="#fff" font-size="16.3" font-weight="bold" textLength="128.3" lengthAdjust="spacingAndGlyphs">Date: 12.08.2024</text>
<text x="480.5" y="29" fill="#fff" font-size="16.3" font-weight="bold" textLength="90.5" lengthAdjust="spacingAndGlyphs">Time: 1200Z</text>
<text x="894" y="40" fill="#fff" font-size="12.7" text-decoration="underline">Parameter</text>
<text x="1124" y="40" fill="#fff" font-size="12.7" text-anchor="end" text-decoration="underline">Value LCL</text>
<text x="1214" y="40" fill="#fff" font-size="12.7" text-anchor="end" text-decoration="underline">Value CCL</text>
<text x="1230.5" y="40" fill="#fff" font-size="12.7" text-decoration="underline">Unit</text>
<text x="894" y="62" fill="#fff" font-size="12.7" textLength="141.3" lengthAdjust="spacingAndGlyphs">Convective Temperature:</text>
<text x="1124" y="62" fill="#ff0000" font-size="12.7" text-anchor="end">31.97</text>
<text x="1230.5" y="62" fill="#fff" font-size="12.7">[°C]</text>
<text x="894" y="79" fill="#fff" font-size="12.7" textLength="93.1" lengthAdjust="spacingAndGlyphs">Snowfall Height:</text>
<text x="1124" y="79" fill="#ffffff" font-size="12.7" text-anchor="end">4065.36</text>
<text x="1230.5" y="79" fill="#fff" font-size="12.7">[m]</text>
<text x="894" y="104" fill="#fff" font-size="12.7" textLength="259.2" lengthAdjust="spacingAndGlyphs" text-decoration="underline">Parcels: Using 50mB mean layer LCL + CCL</text>
<text x="894" y="124" fill="#fff" font-size="12.7" textLength="70.2" lengthAdjust="spacingAndGlyphs">Lifted Index:</text>
<text x="1124" y="124" fill="#ff0000" font-size="12.7" text-anchor="end">-7.15</text>
<text x="1214" y="124" fill="#ff0000" font-size="12.7" text-anchor="end">-8.85</text>
<text x="1230.5" y="124" fill="#fff" font-size="12.7">[°C]</text>
<text x="894" y="141" fill="#fff" font-size="12.7" textLength="62.8" lengthAdjust="spacingAndGlyphs">CAPE ML:</text>
<text x="1124" y="141" fill="#ff0000" font-size="12.7" text-anchor="end">2695.26</text>
<text x="1214" y="141" fill="#ff0000" font-size="12.7" text-anchor="end">3457.43</text>
<text x="1230.5" y="141" fill="#fff" font-size="12.7">[J/kg]</text>
<text x="894" y="158" fill="#fff" font-size="12.7" textLength="148.7" lengthAdjust="spacingAndGlyphs">CINH | LSI (LCL: 857mB):</text>
<text x="1124" y="158" fill="#ffff00" font-size="12.7" text-anchor="end">98.92</text>
<text x="1124" y="158" fill="#ffffff" font-size="12.7">,</text>
<text x="1137" y="158" fill="#ff0000" font-size="12.7">1.09</text>
<text x="1230.5" y="158" fill="#fff" font-size="12.7">[J/kg], [°C]</text>
<text x="894" y="175" fill="#fff" font-size="12.7" textLength="70.2" lengthAdjust="spacingAndGlyphs">CAPE SFC:</text>
<text x="1124" y="175" fill="#ff0000" font-size="12.7" text-anchor="end">3055.44</text>
<text x="1214" y="175" fill="#ff0000" font-size="12.7" text-anchor="end">3773.74</text>
<text x="1230.5" y="175" fill="#fff" font-size="12.7">[J/kg]</text>
<text x="894" y="192" fill="#fff" font-size="12.7" textLength="129.2" lengthAdjust="spacingAndGlyphs">CAPE MU | CINH MU:</text>
<text x="1124" y="192" fill="#ff0000" font-size="12.7" text-anchor="end">3055.44</text>
<text x="1124" y="192" fill="#ffffff" font-size="12.7">,</text>
<text x="1137" y="192" fill="#ff0000" font-size="12.7">76.57</text>
<text x="1230.5" y="192" fill="#fff" font-size="12.7">[J/kg]</text>
<text x="894" y="209" fill="#fff" font-size="12.7" textLength="160.5" lengthAdjust="spacingAndGlyphs">3km SFC CAPE | IL CAPE:</text>
<text x="1124" y="209" fill="#ffff00" font-size="12.7" text-anchor="end">55.61</text>
<text x="1124" y="209" fill="#ffffff" font-size="12.7">,</text>
<text x="1137" y="209" fill="#ff0000" font-size="12.7">3443.97</text>
<text x="1230.5" y="209" fill="#fff" font-size="12.7">[J/kg]</text>
<text x="894" y="226" fill="#fff" font-size="12.7" textLength="142.7" lengthAdjust="spacingAndGlyphs">DCAPE (LFS = 500mB):</text>
<text x="1124" y="226" fill="#ff0000" font-size="12.7" text-anchor="end">610.46</text>
<text x="1230.5" y="226" fill="#fff" font-size="12.7">[J/kg]</text>
<text x="894" y="243" fill="#fff" font-size="12.7" textLength="120.8" lengthAdjust="spacingAndGlyphs">850-600 Lapse Rate:</text>
<text x="1124" y="243" fill="#ff0000" font-size="12.7" text-anchor="end">21.67</text>
<text x="1230.5" y="243" fill="#fff" font-size="12.7">[°C]</text>
<text x="894" y="260" fill="#fff" font-size="12.7" textLength="156.5" lengthAdjust="spacingAndGlyphs">FM Hail Size | SHIP | LHP:</text>
<text x="1124" y="260" fill="#ff0000" font-size="12.7" text-anchor="end">3.8 - 5.1</text>
<text x="1124" y="260" fill="#ffffff" font-size="12.7">,</text>
<text x="1137" y="260" font-size="12.7"><tspan fill="#ff0000">1.14</tspan><tspan fill="#fff">,</tspan></text>
<text x="1173" y="260" fill="#00ff00" font-size="12.7">0.00</text>
<text x="1230.5" y="260" fill="#fff" font-size="12.7">[cm], [1], [1]</text>
<text x="894" y="277" fill="#fff" font-size="12.7" textLength="147.7" lengthAdjust="spacingAndGlyphs">Estofex Exp. Hail Param:</text>
<text x="1124" y="277" fill="#ff0000" font-size="12.7" text-anchor="end">3.52</text>
<text x="1230.5" y="277" fill="#fff" font-size="12.7">[cm]</text>
<text x="894" y="294" fill="#fff" font-size="12.7" textLength="173.3" lengthAdjust="spacingAndGlyphs">Max. Hail Size (OLD, MU, IL):</text>
<text x="1124" y="294" fill="#ffff00" font-size="12.7" text-anchor="end">2.77</text>
<text x="1124" y="294" fill="#ffffff" font-size="12.7">,</text>
<text x="1136" y="294" font-size="12.7"><tspan fill="#ff0000">4.76</tspan><tspan fill="#fff">,</tspan></text>
<text x="1173" y="294" fill="#ff0000" font-size="12.7">8.05</text>
<text x="1230.5" y="294" fill="#fff" font-size="12.7">[cm]</text>
<text x="894" y="313" fill="#fff" font-size="12.7" textLength="106.6" lengthAdjust="spacingAndGlyphs">LCL / CCL (AGL):</text>
<text x="1124" y="313" fill="#ff0000" font-size="12.7" text-anchor="end">974.32</text>
<text x="1214" y="313" fill="#ffff00" font-size="12.7" text-anchor="end">1487.83</text>
<text x="1230.5" y="313" fill="#fff" font-size="12.7">[m]</text>
<text x="894" y="330" fill="#fff" font-size="12.7" textLength="106.6" lengthAdjust="spacingAndGlyphs">Convective Height:</text>
<text x="1124" y="330" fill="#ff0000" font-size="12.7" text-anchor="end">10.67</text>
<text x="1214" y="330" fill="#ff0000" font-size="12.7" text-anchor="end">10.25</text>
<text x="1230.5" y="330" fill="#fff" font-size="12.7">[km]</text>
<text x="894" y="356" fill="#fff" font-size="12.7" textLength="106.2" lengthAdjust="spacingAndGlyphs" text-decoration="underline">Convective Indices</text>
<text x="894" y="376" fill="#fff" font-size="12.7" textLength="96.5" lengthAdjust="spacingAndGlyphs">Showalter Index:</text>
<text x="1124" y="376" fill="#ff0000" font-size="12.7" text-anchor="end">-2.17</text>
<text x="1230.5" y="376" fill="#fff" font-size="12.7">[°C]</text>
<text x="894" y="393" fill="#fff" font-size="12.7" textLength="151.3" lengthAdjust="spacingAndGlyphs">Modified Thompson Index:</text>
<text x="1124" y="393" fill="#ff0000" font-size="12.7" text-anchor="end">54.10</text>
<text x="1230.5" y="393" fill="#fff" font-size="12.7">[°C]</text>
<text x="894" y="410" fill="#fff" font-size="12.7" textLength="106.2" lengthAdjust="spacingAndGlyphs">Total Totals Index:</text>
<text x="1124" y="410" fill="#ff0000" font-size="12.7" text-anchor="end">51.50</text>
<text x="1230.5" y="410" fill="#fff" font-size="12.7">[°C]</text>
<text x="894" y="427" fill="#fff" font-size="12.7" textLength="57.9" lengthAdjust="spacingAndGlyphs">KO Index:</text>
<text x="1124" y="427" fill="#ff0000" font-size="12.7" text-anchor="end">-19.26</text>
<text x="1230.5" y="427" fill="#fff" font-size="12.7">[1]</text>
<text x="894" y="444" fill="#fff" font-size="12.7" textLength="124.5" lengthAdjust="spacingAndGlyphs">Craven SigSvr / 1000:</text>
<text x="1124" y="444" fill="#ff0000" font-size="12.7" text-anchor="end">21.46</text>
<text x="1230.5" y="444" fill="#fff" font-size="12.7">[m^3/s^3]</text>
<text x="894" y="461" fill="#fff" font-size="12.7" textLength="115.2" lengthAdjust="spacingAndGlyphs">SCP RM (new, old):</text>
<text x="1124" y="461" fill="#ff0000" font-size="12.7" text-anchor="end">1.37</text>
<text x="1124" y="461" fill="#ffffff" font-size="12.7">,</text>
<text x="1136" y="461" fill="#00ff00" font-size="12.7">0.06</text>
<text x="1230.5" y="461" fill="#fff" font-size="12.7">[1]</text>
<text x="894" y="478" fill="#fff" font-size="12.7" textLength="89.4" lengthAdjust="spacingAndGlyphs">STP (new, old):</text>
<text x="1124" y="478" fill="#00ff00" font-size="12.7" text-anchor="end">0.12</text>
<text x="1124" y="478" fill="#ffffff" font-size="12.7">,</text>
<text x="1136" y="478" fill="#00ff00" font-size="12.7">0.02</text>
<text x="1230.5" y="478" fill="#fff" font-size="12.7">[1]</text>
<text x="894" y="495" fill="#fff" font-size="12.7" textLength="136.1" lengthAdjust="spacingAndGlyphs">SB STP (fix) | CWASP:</text>
<text x="1124" y="495" fill="#00ff00" font-size="12.7" text-anchor="end">0.04</text>
<text x="1124" y="495" fill="#ffffff" font-size="12.7">,</text>
<text x="1136" y="495" fill="#00ff00" font-size="12.7">42.42</text>
<text x="1230.5" y="495" fill="#fff" font-size="12.7">[1], [%]</text>
<text x="894" y="512" fill="#fff" font-size="12.7" textLength="113.3" lengthAdjust="spacingAndGlyphs">DCP | MMP | MSP:</text>
<text x="1124" y="512" fill="#00ff00" font-size="12.7" text-anchor="end">0.23</text>
<text x="1124" y="512" fill="#ffffff" font-size="12.7">,</text>
<text x="1136" y="512" font-size="12.7"><tspan fill="#00ff00">33.13</tspan><tspan fill="#fff">,</tspan></text>
<text x="1180.5" y="512" fill="#00ff00" font-size="12.7">18.49</text>
<text x="1230.5" y="512" fill="#fff" font-size="12.7">[1], [%], [%]</text>
<text x="894" y="529" fill="#fff" font-size="12.7" textLength="127.1" lengthAdjust="spacingAndGlyphs">MB Comp | SHERBE:</text>
<text x="1124" y="529" fill="#ffff00" font-size="12.7" text-anchor="end">3.00</text>
<text x="1124" y="529" fill="#ffffff" font-size="12.7">,</text>
<text x="1136" y="529" fill="#ffff00" font-size="12.7">0.69</text>
<text x="1230.5" y="529" fill="#fff" font-size="12.7">[1], [1]</text>
<text x="894" y="546" fill="#fff" font-size="12.7" textLength="146.4" lengthAdjust="spacingAndGlyphs">Exp. Supercell Index CH:</text>
<text x="1124" y="546" fill="#ff0000" font-size="12.7" text-anchor="end">2.59</text>
<text x="1230.5" y="546" fill="#fff" font-size="12.7">[1]</text>
<text x="894" y="563" fill="#fff" font-size="12.7" textLength="100.4" lengthAdjust="spacingAndGlyphs">SWISS 12 Index:</text>
<text x="1124" y="563" fill="#ff0000" font-size="12.7" text-anchor="end">-9.47</text>
<text x="1230.5" y="563" fill="#fff" font-size="12.7">[1]</text>
<text x="894" y="580" fill="#fff" font-size="12.7" textLength="111" lengthAdjust="spacingAndGlyphs">Precipitable Water:</text>
<text x="1124" y="580" fill="#ff0000" font-size="12.7" text-anchor="end">38.14</text>
<text x="1230.5" y="580" fill="#fff" font-size="12.7">[mm]</text>
<text x="894" y="604" fill="#fff" font-size="12.7" textLength="101.4" lengthAdjust="spacingAndGlyphs" text-decoration="underline">Wind Parameters</text>
<text x="894" y="624" fill="#fff" font-size="12.7" textLength="144.2" lengthAdjust="spacingAndGlyphs">Storm Direction | Motion:</text>
<text x="1124" y="624" fill="#ffffff" font-size="12.7" text-anchor="end">207.21</text>
<text x="1124" y="624" fill="#ffffff" font-size="12.7">,</text>
<text x="1136" y="624" fill="#00ff00" font-size="12.7">4.88</text>
<text x="1230.5" y="624" fill="#fff" font-size="12.7">[°], [knt]</text>
<text x="894" y="642" fill="#fff" font-size="12.7" textLength="117.5" lengthAdjust="spacingAndGlyphs">500m Critical Angle:</text>
<text x="1124" y="642" fill="#00ff00" font-size="12.7" text-anchor="end">130.27</text>
<text x="1230.5" y="642" fill="#fff" font-size="12.7">[°]</text>
<text x="894" y="661" fill="#fff" font-size="12.7" textLength="108.8" lengthAdjust="spacingAndGlyphs">SR Wind Sfc-2km:</text>
<text x="1124" y="661" fill="#00ff00" font-size="12.7" text-anchor="end">7.38</text>
<text x="1230.5" y="661" fill="#fff" font-size="12.7">[knt]</text>
<text x="894" y="678" fill="#fff" font-size="12.7" textLength="114.2" lengthAdjust="spacingAndGlyphs">SR Wind 4km-6km:</text>
<text x="1124" y="678" fill="#00ff00" font-size="12.7" text-anchor="end">7.63</text>
<text x="1230.5" y="678" fill="#fff" font-size="12.7">[knt]</text>
<text x="894" y="695" fill="#fff" font-size="12.7" textLength="121.6" lengthAdjust="spacingAndGlyphs">SR Wind 9km-11km:</text>
<text x="1124" y="695" fill="#ff0000" font-size="12.7" text-anchor="end">11.21</text>
<text x="1230.5" y="695" fill="#fff" font-size="12.7">[knt] HP</text>
<text x="894" y="715" fill="#fff" font-size="12.7" textLength="122.3" lengthAdjust="spacingAndGlyphs">Effective Shear 6000:</text>
<text x="1124" y="715" fill="#00ff00" font-size="12.7" text-anchor="end">15.48</text>
<text x="1230.5" y="715" fill="#fff" font-size="12.7">[knt]</text>
<text x="894" y="735" fill="#fff" font-size="12.7" textLength="148" lengthAdjust="spacingAndGlyphs">Bulk Richardson Number:</text>
<text x="1124" y="735" fill="#ffff00" font-size="12.7" text-anchor="end">796.00</text>
<text x="1214" y="735" fill="#ffff00" font-size="12.7" text-anchor="end">999.00</text>
<text x="1230.5" y="735" fill="#fff" font-size="12.7">[1]</text>
<text x="894" y="755" fill="#fff" font-size="12.7" textLength="112" lengthAdjust="spacingAndGlyphs">3km Effective SRH:</text>
<text x="1124" y="755" fill="#00ff00" font-size="12.7" text-anchor="end">22.04</text>
<text x="1230.5" y="755" fill="#fff" font-size="12.7">[m^2/s^2]</text>
<text x="894" y="772" fill="#fff" font-size="12.7" textLength="174.5" lengthAdjust="spacingAndGlyphs">Max 3km SRH (0-2km) | AGL:</text>
<text x="1124" y="772" fill="#00ff00" font-size="12.7" text-anchor="end">36.08</text>
<text x="1124" y="772" fill="#ffffff" font-size="12.7">,</text>
<text x="1136" y="772" fill="#00ff00" font-size="12.7">2000.00</text>
<text x="1230.5" y="772" fill="#fff" font-size="12.7">[m^2/s^2], [m]</text>
<text x="894" y="792" fill="#fff" font-size="12.7" textLength="156.1" lengthAdjust="spacingAndGlyphs">3km Energy Helicity Index:</text>
<text x="1124" y="792" fill="#00ff00" font-size="12.7" text-anchor="end">0.37</text>
<text x="1214" y="792" fill="#00ff00" font-size="12.7" text-anchor="end">0.48</text>
<text x="1230.5" y="792" fill="#fff" font-size="12.7">[1]</text>
<text x="894" y="810" fill="#fff" font-size="12.7" textLength="141.6" lengthAdjust="spacingAndGlyphs">3km Vorticity Gen. Pot.:</text>
<text x="1124" y="810" fill="#00ff00" font-size="12.7" text-anchor="end">0.06</text>
<text x="1214" y="810" fill="#00ff00" font-size="12.7" text-anchor="end">0.07</text>
<text x="1230.5" y="810" fill="#fff" font-size="12.7">[m/s^2]</text>
<rect x="729" y="827" width="15" height="8" fill="#ff0000"/>
<text x="753" y="835.6" fill="#ff0000" font-size="12.7" textLength="113.3" lengthAdjust="spacingAndGlyphs">Temperature Profile</text>
<rect x="729" y="847" width="15" height="8" fill="#00ffff"/>
<text x="753" y="855.6" fill="#00ffff" font-size="12.7" textLength="93.7" lengthAdjust="spacingAndGlyphs">Dewpoint Profile</text>
<rect x="729" y="867" width="15" height="8" fill="#00ff00"/>
<text x="753" y="875.6" fill="#00ff00" font-size="12.7" textLength="137.3" lengthAdjust="spacingAndGlyphs">OBS Windspeed Profile</text>
<rect x="729" y="887" width="15" height="8" fill="#ff0080"/>
<text x="753" y="895.6" fill="#ff0080" font-size="12.7" textLength="127.8" lengthAdjust="spacingAndGlyphs">SR Windspeed Profile</text>
<rect x="729" y="907" width="15" height="8" fill="#c8c800"/>
<text x="753" y="915.6" fill="#c8c800" font-size="12.7" textLength="223.6" lengthAdjust="spacingAndGlyphs">Sfc-3km Storm Relative Helicity Profile</text>
<rect x="729" y="927" width="15" height="8" fill="#404000"/>
<text x="753" y="935.6" fill="#404000" font-size="12.7" textLength="206.3" lengthAdjust="spacingAndGlyphs">Effective Layer (CAPE &gt;= 100 J/kg)</text>
<rect x="1079" y="827" width="15" height="8" fill="#00ff00"/>
<text x="1103.5" y="835.6" fill="#00ff00" font-size="12.7" textLength="184.0" lengthAdjust="spacingAndGlyphs">No / Non Severe Thunderstorms</text>
<rect x="1079" y="847" width="15" height="8" fill="#ffff00"/>
<text x="1103.5" y="855.6" fill="#ffff00" font-size="12.7" textLength="212.1" lengthAdjust="spacingAndGlyphs">Scattered / Moderate Thunderstorms</text>
<rect x="1079" y="867" width="15" height="8" fill="#ff0000"/>
<text x="1103.5" y="875.6" fill="#ff0000" font-size="12.7" textLength="210.3" lengthAdjust="spacingAndGlyphs">Widespread / Severe Thunderstorms</text>
<text x="747" y="32" fill="#00ff00" font-size="14.2" font-weight="bold" textLength="28" lengthAdjust="spacingAndGlyphs">OBS</text>
<text x="818.5" y="32" fill="#ff0080" font-size="14.2" font-weight="bold" textLength="16.5" lengthAdjust="spacingAndGlyphs">SR</text>
<line x1="761.5" y1="40" x2="761.5" y2="770" stroke="#00ff00" stroke-width="1" shape-rendering="crispEdges"/>
<line x1="826.5" y1="40" x2="826.5" y2="770" stroke="#ff0080" stroke-width="1" shape-rendering="crispEdges"/>
</svg></body></html>
